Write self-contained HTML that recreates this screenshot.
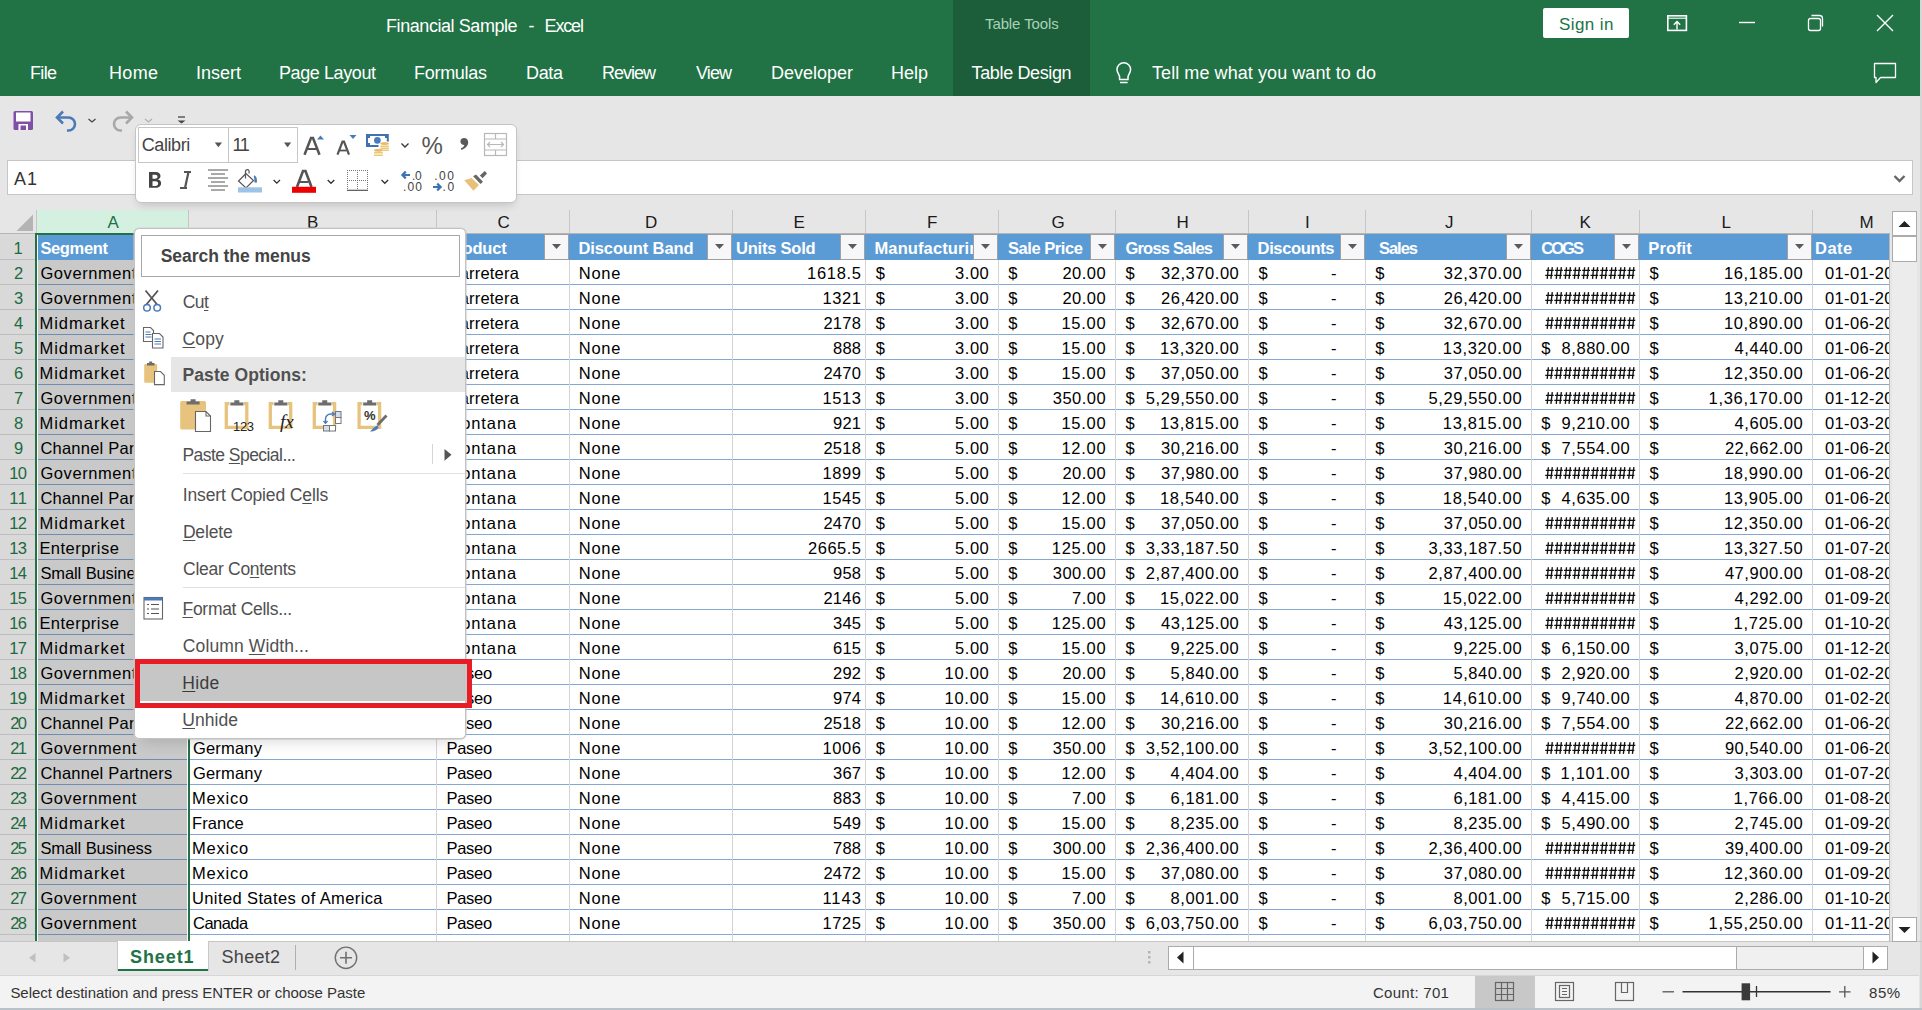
<!DOCTYPE html><html><head><meta charset="utf-8"><style>
html,body{margin:0;padding:0;}body{width:1922px;height:1010px;overflow:hidden;position:relative;background:#e6e6e6;font-family:"Liberation Sans", sans-serif;}
div{box-sizing:border-box;} svg{position:absolute;overflow:visible;}
.u{text-decoration:underline;text-underline-offset:2px;text-decoration-thickness:1px;}
</style></head><body>
<div style="position:absolute;left:0px;top:0px;width:1922px;height:96px;background:#217346;"></div>
<div style="position:absolute;left:953px;top:0px;width:137px;height:96px;background:#1c5e3a;"></div>
<div style="position:absolute;top:16.76px;font-size:18px;line-height:18px;color:#ffffff;white-space:pre;letter-spacing:-0.430px;left:386.00px;">Financial Sample</div>
<div style="position:absolute;top:16.76px;font-size:18px;line-height:18px;color:#ffffff;white-space:pre;left:528.60px;">-</div>
<div style="position:absolute;top:16.76px;font-size:18px;line-height:18px;color:#ffffff;white-space:pre;letter-spacing:-1.129px;left:544.50px;">Excel</div>
<div style="position:absolute;top:15.90px;font-size:15px;line-height:15px;color:#a6d3b6;white-space:pre;letter-spacing:-0.104px;left:985.00px;">Table Tools</div>
<div style="position:absolute;left:1543px;top:8px;width:86px;height:30px;background:#ffffff;border-radius:2px;"></div>
<div style="position:absolute;top:16.31px;font-size:17px;line-height:17px;color:#217346;white-space:pre;letter-spacing:0.413px;left:1559.00px;">Sign in</div>
<svg style="left:0;top:0" width="1922" height="96"><rect x="1667.8" y="15.8" width="18.6" height="14.6" fill="none" stroke="#fff" stroke-width="1.6"/><line x1="1668" y1="18.2" x2="1686" y2="18.2" stroke="#fff" stroke-width="1.1"/><path d="M1677 29.5V21.5M1673.8 24.8l3.2-3.2 3.2 3.2" fill="none" stroke="#fff" stroke-width="1.4"/><line x1="1739" y1="22.5" x2="1755" y2="22.5" stroke="#fff" stroke-width="1.4"/><rect x="1808.5" y="18.5" width="12" height="12" rx="2" fill="none" stroke="#fff" stroke-width="1.3"/><path d="M1811.5 15.5h8a3 3 0 0 1 3 3v8" fill="none" stroke="#fff" stroke-width="1.3"/><path d="M1877 15l16 16M1893 15l-16 16" stroke="#fff" stroke-width="1.4"/><path d="M1117 69.5a6.8 6.8 0 1 1 13.6 0c0 3.2-2.6 4.8-2.6 7.8v2.2h-8.4v-2.2c0-3-2.6-4.6-2.6-7.8z" fill="none" stroke="#fff" stroke-width="1.5"/><line x1="1120" y1="82.5" x2="1127.6" y2="82.5" stroke="#fff" stroke-width="1.5"/><path d="M1874.5 63.5h21v14h-15l-4.5 5v-5h-1.5z" fill="none" stroke="#fff" stroke-width="1.3" stroke-linejoin="round"/></svg>
<div style="position:absolute;top:63.76px;font-size:18px;line-height:18px;color:#ffffff;white-space:pre;letter-spacing:-0.664px;left:30.00px;">File</div>
<div style="position:absolute;top:63.76px;font-size:18px;line-height:18px;color:#ffffff;white-space:pre;letter-spacing:0.332px;left:109.00px;">Home</div>
<div style="position:absolute;top:63.76px;font-size:18px;line-height:18px;color:#ffffff;white-space:pre;letter-spacing:-0.003px;left:196.00px;">Insert</div>
<div style="position:absolute;top:63.76px;font-size:18px;line-height:18px;color:#ffffff;white-space:pre;letter-spacing:-0.408px;left:279.00px;">Page Layout</div>
<div style="position:absolute;top:63.76px;font-size:18px;line-height:18px;color:#ffffff;white-space:pre;letter-spacing:-0.288px;left:414.00px;">Formulas</div>
<div style="position:absolute;top:63.76px;font-size:18px;line-height:18px;color:#ffffff;white-space:pre;letter-spacing:-0.337px;left:526.00px;">Data</div>
<div style="position:absolute;top:63.76px;font-size:18px;line-height:18px;color:#ffffff;white-space:pre;letter-spacing:-1.004px;left:602.00px;">Review</div>
<div style="position:absolute;top:63.76px;font-size:18px;line-height:18px;color:#ffffff;white-space:pre;letter-spacing:-0.897px;left:696.00px;">View</div>
<div style="position:absolute;top:63.76px;font-size:18px;line-height:18px;color:#ffffff;white-space:pre;letter-spacing:-0.006px;left:771.00px;">Developer</div>
<div style="position:absolute;top:63.76px;font-size:18px;line-height:18px;color:#ffffff;white-space:pre;letter-spacing:-0.003px;left:891.00px;">Help</div>
<div style="position:absolute;top:63.76px;font-size:18px;line-height:18px;color:#ffffff;white-space:pre;letter-spacing:-0.368px;left:971.60px;">Table Design</div>
<div style="position:absolute;top:63.76px;font-size:18px;line-height:18px;color:#ffffff;white-space:pre;letter-spacing:0.073px;left:1152.00px;">Tell me what you want to do</div>
<svg style="left:0;top:96" width="200" height="60"><rect x="13.5" y="15" width="19.5" height="19" rx="1.5" fill="#8050a8"/><rect x="16" y="16.5" width="14.5" height="9" fill="#fff"/><rect x="18.5" y="28" width="9.5" height="6" fill="#fff"/><rect x="20.5" y="29.5" width="5.5" height="4.5" fill="#8050a8"/><path d="M58 21.5h10.5a6.5 6.5 0 0 1 0 13h-1.5" fill="none" stroke="#4a7bb7" stroke-width="2.6"/><path d="M63 15.5l-6 6 6 6" fill="none" stroke="#4a7bb7" stroke-width="2.6" stroke-linejoin="miter"/><path d="M88.5 23l3.5 3 3.5-3" fill="none" stroke="#444" stroke-width="1.2"/><path d="M131 21.5h-10.5a6.5 6.5 0 0 0 0 13h1.5" fill="none" stroke="#a8a8a8" stroke-width="2.6"/><path d="M126 15.5l6 6-6 6" fill="none" stroke="#a8a8a8" stroke-width="2.6"/><path d="M145 23l3.5 3 3.5-3" fill="none" stroke="#b0b0b0" stroke-width="1.2"/><line x1="178" y1="21" x2="185" y2="21" stroke="#444" stroke-width="1.3"/><path d="M177.5 24.5h8l-4 3z" fill="#444"/></svg>
<div style="position:absolute;left:7px;top:160px;width:1906px;height:35px;background:#ffffff;border:1px solid #c6c6c6;"></div>
<div style="position:absolute;top:169.76px;font-size:18px;line-height:18px;color:#333333;white-space:pre;letter-spacing:0.994px;left:14.00px;">A1</div>
<svg style="left:0;top:0" width="1922" height="200"><path d="M1894.5 176l5 5 5-5" fill="none" stroke="#666" stroke-width="2.4"/></svg>
<div style="position:absolute;left:1920px;top:0px;width:2px;height:1010px;background:#d6d6d6;"></div>
<div style="position:absolute;left:0px;top:210px;width:1889px;height:24px;background:#e6e6e6;"></div>
<div style="position:absolute;left:37px;top:210px;width:151px;height:24px;background:#d3f0e0;"></div>
<svg style="left:0;top:0" width="40" height="240"><path d="M33 214.5V231H16.5z" fill="#b4b4b4"/></svg>
<div style="position:absolute;left:36px;top:210px;width:1px;height:24px;background:#c6c6c6;"></div>
<div style="position:absolute;left:188px;top:210px;width:1px;height:24px;background:#c6c6c6;"></div>
<div style="position:absolute;left:436px;top:210px;width:1px;height:24px;background:#c6c6c6;"></div>
<div style="position:absolute;left:569px;top:210px;width:1px;height:24px;background:#c6c6c6;"></div>
<div style="position:absolute;left:732px;top:210px;width:1px;height:24px;background:#c6c6c6;"></div>
<div style="position:absolute;left:865px;top:210px;width:1px;height:24px;background:#c6c6c6;"></div>
<div style="position:absolute;left:998px;top:210px;width:1px;height:24px;background:#c6c6c6;"></div>
<div style="position:absolute;left:1115px;top:210px;width:1px;height:24px;background:#c6c6c6;"></div>
<div style="position:absolute;left:1248px;top:210px;width:1px;height:24px;background:#c6c6c6;"></div>
<div style="position:absolute;left:1365px;top:210px;width:1px;height:24px;background:#c6c6c6;"></div>
<div style="position:absolute;left:1531px;top:210px;width:1px;height:24px;background:#c6c6c6;"></div>
<div style="position:absolute;left:1639px;top:210px;width:1px;height:24px;background:#c6c6c6;"></div>
<div style="position:absolute;left:1812px;top:210px;width:1px;height:24px;background:#c6c6c6;"></div>
<div style="position:absolute;left:0px;top:233px;width:1890px;height:1px;background:#b4b4b4;"></div>
<div style="position:absolute;top:213.61px;font-size:17px;line-height:17px;color:#217346;white-space:pre;left:107.50px;">A</div>
<div style="position:absolute;top:213.61px;font-size:17px;line-height:17px;color:#1a1a1a;white-space:pre;left:307.00px;">B</div>
<div style="position:absolute;top:213.61px;font-size:17px;line-height:17px;color:#1a1a1a;white-space:pre;left:497.50px;">C</div>
<div style="position:absolute;top:213.61px;font-size:17px;line-height:17px;color:#1a1a1a;white-space:pre;left:645.00px;">D</div>
<div style="position:absolute;top:213.61px;font-size:17px;line-height:17px;color:#1a1a1a;white-space:pre;left:793.50px;">E</div>
<div style="position:absolute;top:213.61px;font-size:17px;line-height:17px;color:#1a1a1a;white-space:pre;left:927.00px;">F</div>
<div style="position:absolute;top:213.61px;font-size:17px;line-height:17px;color:#1a1a1a;white-space:pre;left:1051.50px;">G</div>
<div style="position:absolute;top:213.61px;font-size:17px;line-height:17px;color:#1a1a1a;white-space:pre;left:1176.50px;">H</div>
<div style="position:absolute;top:213.61px;font-size:17px;line-height:17px;color:#1a1a1a;white-space:pre;left:1305.00px;">I</div>
<div style="position:absolute;top:213.61px;font-size:17px;line-height:17px;color:#1a1a1a;white-space:pre;left:1445.00px;">J</div>
<div style="position:absolute;top:213.61px;font-size:17px;line-height:17px;color:#1a1a1a;white-space:pre;left:1579.50px;">K</div>
<div style="position:absolute;top:213.61px;font-size:17px;line-height:17px;color:#1a1a1a;white-space:pre;left:1721.50px;">L</div>
<div style="position:absolute;top:213.61px;font-size:17px;line-height:17px;color:#1a1a1a;white-space:pre;left:1859.50px;">M</div>
<div style="position:absolute;left:0px;top:234px;width:36px;height:707px;background:#d9d9d9;"></div>
<div style="position:absolute;left:36px;top:235px;width:1853px;height:706px;background:#ffffff;"></div>
<div style="position:absolute;left:1889px;top:234px;width:1px;height:707px;background:#b8b8b8;"></div>
<div style="position:absolute;left:0px;top:941px;width:1922px;height:1px;background:#c6c6c6;"></div>
<div style="position:absolute;left:38px;top:260px;width:149px;height:681px;background:#c9c9c9;"></div>
<div style="position:absolute;left:37px;top:234px;width:1852px;height:26px;background:#5b9bd5;"></div>
<div style="position:absolute;left:0px;top:259px;width:36px;height:1px;background:#bdbdbd;"></div>
<div style="position:absolute;left:37px;top:284px;width:1852px;height:1px;background:#84a7d3;"></div>
<div style="position:absolute;left:38px;top:284px;width:149px;height:1px;background:#6f8db3;"></div>
<div style="position:absolute;left:0px;top:284px;width:36px;height:1px;background:#bdbdbd;"></div>
<div style="position:absolute;left:37px;top:309px;width:1852px;height:1px;background:#84a7d3;"></div>
<div style="position:absolute;left:38px;top:309px;width:149px;height:1px;background:#6f8db3;"></div>
<div style="position:absolute;left:0px;top:309px;width:36px;height:1px;background:#bdbdbd;"></div>
<div style="position:absolute;left:37px;top:334px;width:1852px;height:1px;background:#84a7d3;"></div>
<div style="position:absolute;left:38px;top:334px;width:149px;height:1px;background:#6f8db3;"></div>
<div style="position:absolute;left:0px;top:334px;width:36px;height:1px;background:#bdbdbd;"></div>
<div style="position:absolute;left:37px;top:359px;width:1852px;height:1px;background:#84a7d3;"></div>
<div style="position:absolute;left:38px;top:359px;width:149px;height:1px;background:#6f8db3;"></div>
<div style="position:absolute;left:0px;top:359px;width:36px;height:1px;background:#bdbdbd;"></div>
<div style="position:absolute;left:37px;top:384px;width:1852px;height:1px;background:#84a7d3;"></div>
<div style="position:absolute;left:38px;top:384px;width:149px;height:1px;background:#6f8db3;"></div>
<div style="position:absolute;left:0px;top:384px;width:36px;height:1px;background:#bdbdbd;"></div>
<div style="position:absolute;left:37px;top:409px;width:1852px;height:1px;background:#84a7d3;"></div>
<div style="position:absolute;left:38px;top:409px;width:149px;height:1px;background:#6f8db3;"></div>
<div style="position:absolute;left:0px;top:409px;width:36px;height:1px;background:#bdbdbd;"></div>
<div style="position:absolute;left:37px;top:434px;width:1852px;height:1px;background:#84a7d3;"></div>
<div style="position:absolute;left:38px;top:434px;width:149px;height:1px;background:#6f8db3;"></div>
<div style="position:absolute;left:0px;top:434px;width:36px;height:1px;background:#bdbdbd;"></div>
<div style="position:absolute;left:37px;top:459px;width:1852px;height:1px;background:#84a7d3;"></div>
<div style="position:absolute;left:38px;top:459px;width:149px;height:1px;background:#6f8db3;"></div>
<div style="position:absolute;left:0px;top:459px;width:36px;height:1px;background:#bdbdbd;"></div>
<div style="position:absolute;left:37px;top:484px;width:1852px;height:1px;background:#84a7d3;"></div>
<div style="position:absolute;left:38px;top:484px;width:149px;height:1px;background:#6f8db3;"></div>
<div style="position:absolute;left:0px;top:484px;width:36px;height:1px;background:#bdbdbd;"></div>
<div style="position:absolute;left:37px;top:509px;width:1852px;height:1px;background:#84a7d3;"></div>
<div style="position:absolute;left:38px;top:509px;width:149px;height:1px;background:#6f8db3;"></div>
<div style="position:absolute;left:0px;top:509px;width:36px;height:1px;background:#bdbdbd;"></div>
<div style="position:absolute;left:37px;top:534px;width:1852px;height:1px;background:#84a7d3;"></div>
<div style="position:absolute;left:38px;top:534px;width:149px;height:1px;background:#6f8db3;"></div>
<div style="position:absolute;left:0px;top:534px;width:36px;height:1px;background:#bdbdbd;"></div>
<div style="position:absolute;left:37px;top:559px;width:1852px;height:1px;background:#84a7d3;"></div>
<div style="position:absolute;left:38px;top:559px;width:149px;height:1px;background:#6f8db3;"></div>
<div style="position:absolute;left:0px;top:559px;width:36px;height:1px;background:#bdbdbd;"></div>
<div style="position:absolute;left:37px;top:584px;width:1852px;height:1px;background:#84a7d3;"></div>
<div style="position:absolute;left:38px;top:584px;width:149px;height:1px;background:#6f8db3;"></div>
<div style="position:absolute;left:0px;top:584px;width:36px;height:1px;background:#bdbdbd;"></div>
<div style="position:absolute;left:37px;top:609px;width:1852px;height:1px;background:#84a7d3;"></div>
<div style="position:absolute;left:38px;top:609px;width:149px;height:1px;background:#6f8db3;"></div>
<div style="position:absolute;left:0px;top:609px;width:36px;height:1px;background:#bdbdbd;"></div>
<div style="position:absolute;left:37px;top:634px;width:1852px;height:1px;background:#84a7d3;"></div>
<div style="position:absolute;left:38px;top:634px;width:149px;height:1px;background:#6f8db3;"></div>
<div style="position:absolute;left:0px;top:634px;width:36px;height:1px;background:#bdbdbd;"></div>
<div style="position:absolute;left:37px;top:659px;width:1852px;height:1px;background:#84a7d3;"></div>
<div style="position:absolute;left:38px;top:659px;width:149px;height:1px;background:#6f8db3;"></div>
<div style="position:absolute;left:0px;top:659px;width:36px;height:1px;background:#bdbdbd;"></div>
<div style="position:absolute;left:37px;top:684px;width:1852px;height:1px;background:#84a7d3;"></div>
<div style="position:absolute;left:38px;top:684px;width:149px;height:1px;background:#6f8db3;"></div>
<div style="position:absolute;left:0px;top:684px;width:36px;height:1px;background:#bdbdbd;"></div>
<div style="position:absolute;left:37px;top:709px;width:1852px;height:1px;background:#84a7d3;"></div>
<div style="position:absolute;left:38px;top:709px;width:149px;height:1px;background:#6f8db3;"></div>
<div style="position:absolute;left:0px;top:709px;width:36px;height:1px;background:#bdbdbd;"></div>
<div style="position:absolute;left:37px;top:734px;width:1852px;height:1px;background:#84a7d3;"></div>
<div style="position:absolute;left:38px;top:734px;width:149px;height:1px;background:#6f8db3;"></div>
<div style="position:absolute;left:0px;top:734px;width:36px;height:1px;background:#bdbdbd;"></div>
<div style="position:absolute;left:37px;top:759px;width:1852px;height:1px;background:#84a7d3;"></div>
<div style="position:absolute;left:38px;top:759px;width:149px;height:1px;background:#6f8db3;"></div>
<div style="position:absolute;left:0px;top:759px;width:36px;height:1px;background:#bdbdbd;"></div>
<div style="position:absolute;left:37px;top:784px;width:1852px;height:1px;background:#84a7d3;"></div>
<div style="position:absolute;left:38px;top:784px;width:149px;height:1px;background:#6f8db3;"></div>
<div style="position:absolute;left:0px;top:784px;width:36px;height:1px;background:#bdbdbd;"></div>
<div style="position:absolute;left:37px;top:809px;width:1852px;height:1px;background:#84a7d3;"></div>
<div style="position:absolute;left:38px;top:809px;width:149px;height:1px;background:#6f8db3;"></div>
<div style="position:absolute;left:0px;top:809px;width:36px;height:1px;background:#bdbdbd;"></div>
<div style="position:absolute;left:37px;top:834px;width:1852px;height:1px;background:#84a7d3;"></div>
<div style="position:absolute;left:38px;top:834px;width:149px;height:1px;background:#6f8db3;"></div>
<div style="position:absolute;left:0px;top:834px;width:36px;height:1px;background:#bdbdbd;"></div>
<div style="position:absolute;left:37px;top:859px;width:1852px;height:1px;background:#84a7d3;"></div>
<div style="position:absolute;left:38px;top:859px;width:149px;height:1px;background:#6f8db3;"></div>
<div style="position:absolute;left:0px;top:859px;width:36px;height:1px;background:#bdbdbd;"></div>
<div style="position:absolute;left:37px;top:884px;width:1852px;height:1px;background:#84a7d3;"></div>
<div style="position:absolute;left:38px;top:884px;width:149px;height:1px;background:#6f8db3;"></div>
<div style="position:absolute;left:0px;top:884px;width:36px;height:1px;background:#bdbdbd;"></div>
<div style="position:absolute;left:37px;top:909px;width:1852px;height:1px;background:#84a7d3;"></div>
<div style="position:absolute;left:38px;top:909px;width:149px;height:1px;background:#6f8db3;"></div>
<div style="position:absolute;left:0px;top:909px;width:36px;height:1px;background:#bdbdbd;"></div>
<div style="position:absolute;left:37px;top:934px;width:1852px;height:1px;background:#84a7d3;"></div>
<div style="position:absolute;left:38px;top:934px;width:149px;height:1px;background:#6f8db3;"></div>
<div style="position:absolute;left:0px;top:934px;width:36px;height:1px;background:#bdbdbd;"></div>
<div style="position:absolute;left:37px;top:959px;width:1852px;height:1px;background:#84a7d3;"></div>
<div style="position:absolute;left:38px;top:959px;width:149px;height:1px;background:#6f8db3;"></div>
<div style="position:absolute;left:0px;top:959px;width:36px;height:1px;background:#bdbdbd;"></div>
<div style="position:absolute;left:436px;top:260px;width:1px;height:681px;background:#d4d4d4;"></div>
<div style="position:absolute;left:569px;top:260px;width:1px;height:681px;background:#d4d4d4;"></div>
<div style="position:absolute;left:732px;top:260px;width:1px;height:681px;background:#d4d4d4;"></div>
<div style="position:absolute;left:865px;top:260px;width:1px;height:681px;background:#d4d4d4;"></div>
<div style="position:absolute;left:998px;top:260px;width:1px;height:681px;background:#d4d4d4;"></div>
<div style="position:absolute;left:1115px;top:260px;width:1px;height:681px;background:#d4d4d4;"></div>
<div style="position:absolute;left:1248px;top:260px;width:1px;height:681px;background:#d4d4d4;"></div>
<div style="position:absolute;left:1365px;top:260px;width:1px;height:681px;background:#d4d4d4;"></div>
<div style="position:absolute;left:1531px;top:260px;width:1px;height:681px;background:#d4d4d4;"></div>
<div style="position:absolute;left:1639px;top:260px;width:1px;height:681px;background:#d4d4d4;"></div>
<div style="position:absolute;left:1812px;top:260px;width:1px;height:681px;background:#d4d4d4;"></div>
<div style="position:absolute;left:37px;top:235px;width:1px;height:706px;background:#ffffff;"></div>
<div style="position:absolute;left:187px;top:235px;width:1px;height:706px;background:#ffffff;"></div>
<div style="position:absolute;left:0;top:0;width:1889px;height:941px;overflow:hidden;">
<div style="position:absolute;top:240.03px;font-size:16.5px;line-height:16.5px;color:#1d6a40;white-space:pre;left:13.50px;">1</div>
<div style="position:absolute;top:265.03px;font-size:16.5px;line-height:16.5px;color:#1d6a40;white-space:pre;left:14.00px;">2</div>
<div style="position:absolute;top:290.03px;font-size:16.5px;line-height:16.5px;color:#1d6a40;white-space:pre;left:14.00px;">3</div>
<div style="position:absolute;top:315.03px;font-size:16.5px;line-height:16.5px;color:#1d6a40;white-space:pre;left:14.00px;">4</div>
<div style="position:absolute;top:340.03px;font-size:16.5px;line-height:16.5px;color:#1d6a40;white-space:pre;left:14.00px;">5</div>
<div style="position:absolute;top:365.03px;font-size:16.5px;line-height:16.5px;color:#1d6a40;white-space:pre;left:14.00px;">6</div>
<div style="position:absolute;top:390.03px;font-size:16.5px;line-height:16.5px;color:#1d6a40;white-space:pre;left:14.00px;">7</div>
<div style="position:absolute;top:415.03px;font-size:16.5px;line-height:16.5px;color:#1d6a40;white-space:pre;left:14.00px;">8</div>
<div style="position:absolute;top:440.03px;font-size:16.5px;line-height:16.5px;color:#1d6a40;white-space:pre;left:14.00px;">9</div>
<div style="position:absolute;top:465.03px;font-size:16.5px;line-height:16.5px;color:#1d6a40;white-space:pre;letter-spacing:-0.433px;left:9.13px;">10</div>
<div style="position:absolute;top:490.03px;font-size:16.5px;line-height:16.5px;color:#1d6a40;white-space:pre;letter-spacing:0.792px;left:9.13px;">11</div>
<div style="position:absolute;top:515.03px;font-size:16.5px;line-height:16.5px;color:#1d6a40;white-space:pre;letter-spacing:-0.433px;left:9.13px;">12</div>
<div style="position:absolute;top:540.03px;font-size:16.5px;line-height:16.5px;color:#1d6a40;white-space:pre;letter-spacing:-0.433px;left:9.13px;">13</div>
<div style="position:absolute;top:565.03px;font-size:16.5px;line-height:16.5px;color:#1d6a40;white-space:pre;letter-spacing:-0.433px;left:9.13px;">14</div>
<div style="position:absolute;top:590.03px;font-size:16.5px;line-height:16.5px;color:#1d6a40;white-space:pre;letter-spacing:-0.433px;left:9.13px;">15</div>
<div style="position:absolute;top:615.03px;font-size:16.5px;line-height:16.5px;color:#1d6a40;white-space:pre;letter-spacing:-0.433px;left:9.13px;">16</div>
<div style="position:absolute;top:640.03px;font-size:16.5px;line-height:16.5px;color:#1d6a40;white-space:pre;letter-spacing:-0.433px;left:9.13px;">17</div>
<div style="position:absolute;top:665.03px;font-size:16.5px;line-height:16.5px;color:#1d6a40;white-space:pre;letter-spacing:-0.433px;left:9.13px;">18</div>
<div style="position:absolute;top:690.03px;font-size:16.5px;line-height:16.5px;color:#1d6a40;white-space:pre;letter-spacing:-0.433px;left:9.13px;">19</div>
<div style="position:absolute;top:715.03px;font-size:16.5px;line-height:16.5px;color:#1d6a40;white-space:pre;letter-spacing:-1.433px;left:10.13px;">20</div>
<div style="position:absolute;top:740.03px;font-size:16.5px;line-height:16.5px;color:#1d6a40;white-space:pre;letter-spacing:-1.433px;left:10.13px;">21</div>
<div style="position:absolute;top:765.03px;font-size:16.5px;line-height:16.5px;color:#1d6a40;white-space:pre;letter-spacing:-1.433px;left:10.13px;">22</div>
<div style="position:absolute;top:790.03px;font-size:16.5px;line-height:16.5px;color:#1d6a40;white-space:pre;letter-spacing:-1.433px;left:10.13px;">23</div>
<div style="position:absolute;top:815.03px;font-size:16.5px;line-height:16.5px;color:#1d6a40;white-space:pre;letter-spacing:-1.433px;left:10.13px;">24</div>
<div style="position:absolute;top:840.03px;font-size:16.5px;line-height:16.5px;color:#1d6a40;white-space:pre;letter-spacing:-1.433px;left:10.13px;">25</div>
<div style="position:absolute;top:865.03px;font-size:16.5px;line-height:16.5px;color:#1d6a40;white-space:pre;letter-spacing:-1.433px;left:10.13px;">26</div>
<div style="position:absolute;top:890.03px;font-size:16.5px;line-height:16.5px;color:#1d6a40;white-space:pre;letter-spacing:-1.433px;left:10.13px;">27</div>
<div style="position:absolute;top:915.03px;font-size:16.5px;line-height:16.5px;color:#1d6a40;white-space:pre;letter-spacing:-1.433px;left:10.13px;">28</div>
<div style="position:absolute;top:940.03px;font-size:16.5px;line-height:16.5px;color:#1d6a40;white-space:pre;letter-spacing:-1.433px;left:10.13px;">29</div>
<div style="position:absolute;left:38px;top:234px;width:150px;height:25px;overflow:hidden;">
<div style="position:absolute;top:6.03px;font-size:16.5px;line-height:16.5px;color:#ffffff;white-space:pre;font-weight:bold;letter-spacing:-0.359px;left:2.40px;">Segment</div>
</div>
<div style="position:absolute;left:189px;top:234px;width:247px;height:25px;overflow:hidden;">
<div style="position:absolute;top:6.03px;font-size:16.5px;line-height:16.5px;color:#ffffff;white-space:pre;font-weight:bold;letter-spacing:-0.397px;left:4.00px;">Country</div>
</div>
<div style="position:absolute;left:437px;top:234px;width:132px;height:25px;overflow:hidden;">
<div style="position:absolute;top:6.03px;font-size:16.5px;line-height:16.5px;color:#ffffff;white-space:pre;font-weight:bold;letter-spacing:-0.193px;left:8.50px;">Product</div>
</div>
<div style="position:absolute;left:570px;top:234px;width:162px;height:25px;overflow:hidden;">
<div style="position:absolute;top:6.03px;font-size:16.5px;line-height:16.5px;color:#ffffff;white-space:pre;font-weight:bold;letter-spacing:-0.117px;left:8.50px;">Discount Band</div>
</div>
<div style="position:absolute;left:733px;top:234px;width:132px;height:25px;overflow:hidden;">
<div style="position:absolute;top:6.03px;font-size:16.5px;line-height:16.5px;color:#ffffff;white-space:pre;font-weight:bold;letter-spacing:-0.217px;left:3.00px;">Units Sold</div>
</div>
<div style="position:absolute;left:866px;top:234px;width:132px;height:25px;overflow:hidden;">
<div style="position:absolute;top:6.03px;font-size:16.5px;line-height:16.5px;color:#ffffff;white-space:pre;font-weight:bold;letter-spacing:0.109px;left:8.50px;">Manufacturing Price</div>
</div>
<div style="position:absolute;left:999px;top:234px;width:116px;height:25px;overflow:hidden;">
<div style="position:absolute;top:6.03px;font-size:16.5px;line-height:16.5px;color:#ffffff;white-space:pre;font-weight:bold;letter-spacing:-0.454px;left:9.00px;">Sale Price</div>
</div>
<div style="position:absolute;left:1116px;top:234px;width:132px;height:25px;overflow:hidden;">
<div style="position:absolute;top:6.03px;font-size:16.5px;line-height:16.5px;color:#ffffff;white-space:pre;font-weight:bold;letter-spacing:-0.777px;left:9.40px;">Gross Sales</div>
</div>
<div style="position:absolute;left:1249px;top:234px;width:116px;height:25px;overflow:hidden;">
<div style="position:absolute;top:6.03px;font-size:16.5px;line-height:16.5px;color:#ffffff;white-space:pre;font-weight:bold;letter-spacing:-0.364px;left:8.60px;">Discounts</div>
</div>
<div style="position:absolute;left:1366px;top:234px;width:165px;height:25px;overflow:hidden;">
<div style="position:absolute;top:6.03px;font-size:16.5px;line-height:16.5px;color:#ffffff;white-space:pre;font-weight:bold;letter-spacing:-1.038px;left:13.00px;">Sales</div>
</div>
<div style="position:absolute;left:1532px;top:234px;width:107px;height:25px;overflow:hidden;">
<div style="position:absolute;top:6.03px;font-size:16.5px;line-height:16.5px;color:#ffffff;white-space:pre;font-weight:bold;letter-spacing:-1.994px;left:9.30px;">COGS</div>
</div>
<div style="position:absolute;left:1640px;top:234px;width:172px;height:25px;overflow:hidden;">
<div style="position:absolute;top:6.03px;font-size:16.5px;line-height:16.5px;color:#ffffff;white-space:pre;font-weight:bold;letter-spacing:0.076px;left:8.30px;">Profit</div>
</div>
<div style="position:absolute;left:1813px;top:234px;width:76px;height:25px;overflow:hidden;">
<div style="position:absolute;top:6.03px;font-size:16.5px;line-height:16.5px;color:#ffffff;white-space:pre;font-weight:bold;letter-spacing:0.506px;left:2.00px;">Date</div>
</div>
<div style="position:absolute;left:163px;top:234px;width:25px;height:26px;background:#f7f7f9;border:1px solid #a0a0a0;"></div>
<svg style="left:171px;top:244px" width="12" height="8"><path d="M0 0h9l-4.5 5z" fill="#5a5a5a"/></svg>
<div style="position:absolute;left:411px;top:234px;width:25px;height:26px;background:#f7f7f9;border:1px solid #a0a0a0;"></div>
<svg style="left:419px;top:244px" width="12" height="8"><path d="M0 0h9l-4.5 5z" fill="#5a5a5a"/></svg>
<div style="position:absolute;left:544px;top:234px;width:25px;height:26px;background:#f7f7f9;border:1px solid #a0a0a0;"></div>
<svg style="left:552px;top:244px" width="12" height="8"><path d="M0 0h9l-4.5 5z" fill="#5a5a5a"/></svg>
<div style="position:absolute;left:707px;top:234px;width:25px;height:26px;background:#f7f7f9;border:1px solid #a0a0a0;"></div>
<svg style="left:715px;top:244px" width="12" height="8"><path d="M0 0h9l-4.5 5z" fill="#5a5a5a"/></svg>
<div style="position:absolute;left:840px;top:234px;width:25px;height:26px;background:#f7f7f9;border:1px solid #a0a0a0;"></div>
<svg style="left:848px;top:244px" width="12" height="8"><path d="M0 0h9l-4.5 5z" fill="#5a5a5a"/></svg>
<div style="position:absolute;left:973px;top:234px;width:25px;height:26px;background:#f7f7f9;border:1px solid #a0a0a0;"></div>
<svg style="left:981px;top:244px" width="12" height="8"><path d="M0 0h9l-4.5 5z" fill="#5a5a5a"/></svg>
<div style="position:absolute;left:1090px;top:234px;width:25px;height:26px;background:#f7f7f9;border:1px solid #a0a0a0;"></div>
<svg style="left:1098px;top:244px" width="12" height="8"><path d="M0 0h9l-4.5 5z" fill="#5a5a5a"/></svg>
<div style="position:absolute;left:1223px;top:234px;width:25px;height:26px;background:#f7f7f9;border:1px solid #a0a0a0;"></div>
<svg style="left:1231px;top:244px" width="12" height="8"><path d="M0 0h9l-4.5 5z" fill="#5a5a5a"/></svg>
<div style="position:absolute;left:1340px;top:234px;width:25px;height:26px;background:#f7f7f9;border:1px solid #a0a0a0;"></div>
<svg style="left:1348px;top:244px" width="12" height="8"><path d="M0 0h9l-4.5 5z" fill="#5a5a5a"/></svg>
<div style="position:absolute;left:1506px;top:234px;width:25px;height:26px;background:#f7f7f9;border:1px solid #a0a0a0;"></div>
<svg style="left:1514px;top:244px" width="12" height="8"><path d="M0 0h9l-4.5 5z" fill="#5a5a5a"/></svg>
<div style="position:absolute;left:1614px;top:234px;width:25px;height:26px;background:#f7f7f9;border:1px solid #a0a0a0;"></div>
<svg style="left:1622px;top:244px" width="12" height="8"><path d="M0 0h9l-4.5 5z" fill="#5a5a5a"/></svg>
<div style="position:absolute;left:1787px;top:234px;width:25px;height:26px;background:#f7f7f9;border:1px solid #a0a0a0;"></div>
<svg style="left:1795px;top:244px" width="12" height="8"><path d="M0 0h9l-4.5 5z" fill="#5a5a5a"/></svg>
<div style="position:absolute;top:265.03px;font-size:16.5px;line-height:16.5px;color:#000;white-space:pre;letter-spacing:0.577px;left:40.40px;">Government</div>
<div style="position:absolute;top:265.03px;font-size:16.5px;line-height:16.5px;color:#000;white-space:pre;letter-spacing:-0.518px;left:193.00px;">Canada</div>
<div style="position:absolute;top:265.03px;font-size:16.5px;line-height:16.5px;color:#000;white-space:pre;letter-spacing:0.211px;left:447.50px;">Carretera</div>
<div style="position:absolute;top:265.03px;font-size:16.5px;line-height:16.5px;color:#000;white-space:pre;letter-spacing:0.688px;left:578.80px;">None</div>
<div style="position:absolute;top:265.03px;font-size:16.5px;line-height:16.5px;color:#000;white-space:pre;letter-spacing:0.682px;left:807.10px;">1618.5</div>
<div style="position:absolute;top:265.03px;font-size:16.5px;line-height:16.5px;color:#000;white-space:pre;left:875.80px;">$</div>
<div style="position:absolute;top:265.03px;font-size:16.5px;line-height:16.5px;color:#000;white-space:pre;letter-spacing:0.521px;left:955.10px;">3.00</div>
<div style="position:absolute;top:265.03px;font-size:16.5px;line-height:16.5px;color:#000;white-space:pre;left:1008.30px;">$</div>
<div style="position:absolute;top:265.03px;font-size:16.5px;line-height:16.5px;color:#000;white-space:pre;letter-spacing:0.497px;left:1062.40px;">20.00</div>
<div style="position:absolute;top:265.03px;font-size:16.5px;line-height:16.5px;color:#000;white-space:pre;left:1125.50px;">$</div>
<div style="position:absolute;top:265.03px;font-size:16.5px;line-height:16.5px;color:#000;white-space:pre;letter-spacing:0.547px;left:1161.00px;">32,370.00</div>
<div style="position:absolute;top:265.03px;font-size:16.5px;line-height:16.5px;color:#000;white-space:pre;left:1258.50px;">$</div>
<div style="position:absolute;top:265.03px;font-size:16.5px;line-height:16.5px;color:#000;white-space:pre;left:1331.00px;">-</div>
<div style="position:absolute;top:265.03px;font-size:16.5px;line-height:16.5px;color:#000;white-space:pre;left:1375.30px;">$</div>
<div style="position:absolute;top:265.03px;font-size:16.5px;line-height:16.5px;color:#000;white-space:pre;letter-spacing:0.547px;left:1443.80px;">32,370.00</div>
<svg style="left:0;top:0" width="1700" height="945"><path d="M1548.40 267.20L1547.20 278.90M1552.30 267.20L1550.90 278.90M1545.90 270.40h7.85M1545.20 275.40h7.6M1557.46 267.20L1556.26 278.90M1561.36 267.20L1559.96 278.90M1554.96 270.40h7.85M1554.26 275.40h7.6M1566.52 267.20L1565.32 278.90M1570.42 267.20L1569.02 278.90M1564.02 270.40h7.85M1563.32 275.40h7.6M1575.58 267.20L1574.38 278.90M1579.48 267.20L1578.08 278.90M1573.08 270.40h7.85M1572.38 275.40h7.6M1584.64 267.20L1583.44 278.90M1588.54 267.20L1587.14 278.90M1582.14 270.40h7.85M1581.44 275.40h7.6M1593.70 267.20L1592.50 278.90M1597.60 267.20L1596.20 278.90M1591.20 270.40h7.85M1590.50 275.40h7.6M1602.76 267.20L1601.56 278.90M1606.66 267.20L1605.26 278.90M1600.26 270.40h7.85M1599.56 275.40h7.6M1611.82 267.20L1610.62 278.90M1615.72 267.20L1614.32 278.90M1609.32 270.40h7.85M1608.62 275.40h7.6M1620.88 267.20L1619.68 278.90M1624.78 267.20L1623.38 278.90M1618.38 270.40h7.85M1617.68 275.40h7.6M1629.94 267.20L1628.74 278.90M1633.84 267.20L1632.44 278.90M1627.44 270.40h7.85M1626.74 275.40h7.6" stroke="#111" stroke-width="1.35" fill="none"/></svg>
<div style="position:absolute;top:265.03px;font-size:16.5px;line-height:16.5px;color:#000;white-space:pre;left:1649.50px;">$</div>
<div style="position:absolute;top:265.03px;font-size:16.5px;line-height:16.5px;color:#000;white-space:pre;letter-spacing:0.672px;left:1723.90px;">16,185.00</div>
<div style="position:absolute;top:265.03px;font-size:16.5px;line-height:16.5px;color:#000;white-space:pre;letter-spacing:0.356px;left:1825.00px;">01-01-2014</div>
<div style="position:absolute;top:290.03px;font-size:16.5px;line-height:16.5px;color:#000;white-space:pre;letter-spacing:0.577px;left:40.40px;">Government</div>
<div style="position:absolute;top:290.03px;font-size:16.5px;line-height:16.5px;color:#000;white-space:pre;letter-spacing:0.172px;left:193.00px;">Germany</div>
<div style="position:absolute;top:290.03px;font-size:16.5px;line-height:16.5px;color:#000;white-space:pre;letter-spacing:0.211px;left:447.50px;">Carretera</div>
<div style="position:absolute;top:290.03px;font-size:16.5px;line-height:16.5px;color:#000;white-space:pre;letter-spacing:0.688px;left:578.80px;">None</div>
<div style="position:absolute;top:290.03px;font-size:16.5px;line-height:16.5px;color:#000;white-space:pre;letter-spacing:0.623px;left:822.40px;">1321</div>
<div style="position:absolute;top:290.03px;font-size:16.5px;line-height:16.5px;color:#000;white-space:pre;left:875.80px;">$</div>
<div style="position:absolute;top:290.03px;font-size:16.5px;line-height:16.5px;color:#000;white-space:pre;letter-spacing:0.521px;left:955.10px;">3.00</div>
<div style="position:absolute;top:290.03px;font-size:16.5px;line-height:16.5px;color:#000;white-space:pre;left:1008.30px;">$</div>
<div style="position:absolute;top:290.03px;font-size:16.5px;line-height:16.5px;color:#000;white-space:pre;letter-spacing:0.497px;left:1062.40px;">20.00</div>
<div style="position:absolute;top:290.03px;font-size:16.5px;line-height:16.5px;color:#000;white-space:pre;left:1125.50px;">$</div>
<div style="position:absolute;top:290.03px;font-size:16.5px;line-height:16.5px;color:#000;white-space:pre;letter-spacing:0.547px;left:1161.00px;">26,420.00</div>
<div style="position:absolute;top:290.03px;font-size:16.5px;line-height:16.5px;color:#000;white-space:pre;left:1258.50px;">$</div>
<div style="position:absolute;top:290.03px;font-size:16.5px;line-height:16.5px;color:#000;white-space:pre;left:1331.00px;">-</div>
<div style="position:absolute;top:290.03px;font-size:16.5px;line-height:16.5px;color:#000;white-space:pre;left:1375.30px;">$</div>
<div style="position:absolute;top:290.03px;font-size:16.5px;line-height:16.5px;color:#000;white-space:pre;letter-spacing:0.547px;left:1443.80px;">26,420.00</div>
<svg style="left:0;top:0" width="1700" height="945"><path d="M1548.40 292.20L1547.20 303.90M1552.30 292.20L1550.90 303.90M1545.90 295.40h7.85M1545.20 300.40h7.6M1557.46 292.20L1556.26 303.90M1561.36 292.20L1559.96 303.90M1554.96 295.40h7.85M1554.26 300.40h7.6M1566.52 292.20L1565.32 303.90M1570.42 292.20L1569.02 303.90M1564.02 295.40h7.85M1563.32 300.40h7.6M1575.58 292.20L1574.38 303.90M1579.48 292.20L1578.08 303.90M1573.08 295.40h7.85M1572.38 300.40h7.6M1584.64 292.20L1583.44 303.90M1588.54 292.20L1587.14 303.90M1582.14 295.40h7.85M1581.44 300.40h7.6M1593.70 292.20L1592.50 303.90M1597.60 292.20L1596.20 303.90M1591.20 295.40h7.85M1590.50 300.40h7.6M1602.76 292.20L1601.56 303.90M1606.66 292.20L1605.26 303.90M1600.26 295.40h7.85M1599.56 300.40h7.6M1611.82 292.20L1610.62 303.90M1615.72 292.20L1614.32 303.90M1609.32 295.40h7.85M1608.62 300.40h7.6M1620.88 292.20L1619.68 303.90M1624.78 292.20L1623.38 303.90M1618.38 295.40h7.85M1617.68 300.40h7.6M1629.94 292.20L1628.74 303.90M1633.84 292.20L1632.44 303.90M1627.44 295.40h7.85M1626.74 300.40h7.6" stroke="#111" stroke-width="1.35" fill="none"/></svg>
<div style="position:absolute;top:290.03px;font-size:16.5px;line-height:16.5px;color:#000;white-space:pre;left:1649.50px;">$</div>
<div style="position:absolute;top:290.03px;font-size:16.5px;line-height:16.5px;color:#000;white-space:pre;letter-spacing:0.672px;left:1723.90px;">13,210.00</div>
<div style="position:absolute;top:290.03px;font-size:16.5px;line-height:16.5px;color:#000;white-space:pre;letter-spacing:0.356px;left:1825.00px;">01-01-2014</div>
<div style="position:absolute;top:315.03px;font-size:16.5px;line-height:16.5px;color:#000;white-space:pre;letter-spacing:1.034px;left:39.40px;">Midmarket</div>
<div style="position:absolute;top:315.03px;font-size:16.5px;line-height:16.5px;color:#000;white-space:pre;letter-spacing:0.077px;left:192.00px;">France</div>
<div style="position:absolute;top:315.03px;font-size:16.5px;line-height:16.5px;color:#000;white-space:pre;letter-spacing:0.211px;left:447.50px;">Carretera</div>
<div style="position:absolute;top:315.03px;font-size:16.5px;line-height:16.5px;color:#000;white-space:pre;letter-spacing:0.688px;left:578.80px;">None</div>
<div style="position:absolute;top:315.03px;font-size:16.5px;line-height:16.5px;color:#000;white-space:pre;letter-spacing:0.290px;left:823.40px;">2178</div>
<div style="position:absolute;top:315.03px;font-size:16.5px;line-height:16.5px;color:#000;white-space:pre;left:875.80px;">$</div>
<div style="position:absolute;top:315.03px;font-size:16.5px;line-height:16.5px;color:#000;white-space:pre;letter-spacing:0.521px;left:955.10px;">3.00</div>
<div style="position:absolute;top:315.03px;font-size:16.5px;line-height:16.5px;color:#000;white-space:pre;left:1008.30px;">$</div>
<div style="position:absolute;top:315.03px;font-size:16.5px;line-height:16.5px;color:#000;white-space:pre;letter-spacing:0.747px;left:1061.40px;">15.00</div>
<div style="position:absolute;top:315.03px;font-size:16.5px;line-height:16.5px;color:#000;white-space:pre;left:1125.50px;">$</div>
<div style="position:absolute;top:315.03px;font-size:16.5px;line-height:16.5px;color:#000;white-space:pre;letter-spacing:0.547px;left:1161.00px;">32,670.00</div>
<div style="position:absolute;top:315.03px;font-size:16.5px;line-height:16.5px;color:#000;white-space:pre;left:1258.50px;">$</div>
<div style="position:absolute;top:315.03px;font-size:16.5px;line-height:16.5px;color:#000;white-space:pre;left:1331.00px;">-</div>
<div style="position:absolute;top:315.03px;font-size:16.5px;line-height:16.5px;color:#000;white-space:pre;left:1375.30px;">$</div>
<div style="position:absolute;top:315.03px;font-size:16.5px;line-height:16.5px;color:#000;white-space:pre;letter-spacing:0.547px;left:1443.80px;">32,670.00</div>
<svg style="left:0;top:0" width="1700" height="945"><path d="M1548.40 317.20L1547.20 328.90M1552.30 317.20L1550.90 328.90M1545.90 320.40h7.85M1545.20 325.40h7.6M1557.46 317.20L1556.26 328.90M1561.36 317.20L1559.96 328.90M1554.96 320.40h7.85M1554.26 325.40h7.6M1566.52 317.20L1565.32 328.90M1570.42 317.20L1569.02 328.90M1564.02 320.40h7.85M1563.32 325.40h7.6M1575.58 317.20L1574.38 328.90M1579.48 317.20L1578.08 328.90M1573.08 320.40h7.85M1572.38 325.40h7.6M1584.64 317.20L1583.44 328.90M1588.54 317.20L1587.14 328.90M1582.14 320.40h7.85M1581.44 325.40h7.6M1593.70 317.20L1592.50 328.90M1597.60 317.20L1596.20 328.90M1591.20 320.40h7.85M1590.50 325.40h7.6M1602.76 317.20L1601.56 328.90M1606.66 317.20L1605.26 328.90M1600.26 320.40h7.85M1599.56 325.40h7.6M1611.82 317.20L1610.62 328.90M1615.72 317.20L1614.32 328.90M1609.32 320.40h7.85M1608.62 325.40h7.6M1620.88 317.20L1619.68 328.90M1624.78 317.20L1623.38 328.90M1618.38 320.40h7.85M1617.68 325.40h7.6M1629.94 317.20L1628.74 328.90M1633.84 317.20L1632.44 328.90M1627.44 320.40h7.85M1626.74 325.40h7.6" stroke="#111" stroke-width="1.35" fill="none"/></svg>
<div style="position:absolute;top:315.03px;font-size:16.5px;line-height:16.5px;color:#000;white-space:pre;left:1649.50px;">$</div>
<div style="position:absolute;top:315.03px;font-size:16.5px;line-height:16.5px;color:#000;white-space:pre;letter-spacing:0.672px;left:1723.90px;">10,890.00</div>
<div style="position:absolute;top:315.03px;font-size:16.5px;line-height:16.5px;color:#000;white-space:pre;letter-spacing:0.356px;left:1825.00px;">01-06-2014</div>
<div style="position:absolute;top:340.03px;font-size:16.5px;line-height:16.5px;color:#000;white-space:pre;letter-spacing:1.034px;left:39.40px;">Midmarket</div>
<div style="position:absolute;top:340.03px;font-size:16.5px;line-height:16.5px;color:#000;white-space:pre;letter-spacing:0.172px;left:193.00px;">Germany</div>
<div style="position:absolute;top:340.03px;font-size:16.5px;line-height:16.5px;color:#000;white-space:pre;letter-spacing:0.211px;left:447.50px;">Carretera</div>
<div style="position:absolute;top:340.03px;font-size:16.5px;line-height:16.5px;color:#000;white-space:pre;letter-spacing:0.688px;left:578.80px;">None</div>
<div style="position:absolute;top:340.03px;font-size:16.5px;line-height:16.5px;color:#000;white-space:pre;letter-spacing:0.223px;left:833.00px;">888</div>
<div style="position:absolute;top:340.03px;font-size:16.5px;line-height:16.5px;color:#000;white-space:pre;left:875.80px;">$</div>
<div style="position:absolute;top:340.03px;font-size:16.5px;line-height:16.5px;color:#000;white-space:pre;letter-spacing:0.521px;left:955.10px;">3.00</div>
<div style="position:absolute;top:340.03px;font-size:16.5px;line-height:16.5px;color:#000;white-space:pre;left:1008.30px;">$</div>
<div style="position:absolute;top:340.03px;font-size:16.5px;line-height:16.5px;color:#000;white-space:pre;letter-spacing:0.747px;left:1061.40px;">15.00</div>
<div style="position:absolute;top:340.03px;font-size:16.5px;line-height:16.5px;color:#000;white-space:pre;left:1125.50px;">$</div>
<div style="position:absolute;top:340.03px;font-size:16.5px;line-height:16.5px;color:#000;white-space:pre;letter-spacing:0.672px;left:1160.00px;">13,320.00</div>
<div style="position:absolute;top:340.03px;font-size:16.5px;line-height:16.5px;color:#000;white-space:pre;left:1258.50px;">$</div>
<div style="position:absolute;top:340.03px;font-size:16.5px;line-height:16.5px;color:#000;white-space:pre;left:1331.00px;">-</div>
<div style="position:absolute;top:340.03px;font-size:16.5px;line-height:16.5px;color:#000;white-space:pre;left:1375.30px;">$</div>
<div style="position:absolute;top:340.03px;font-size:16.5px;line-height:16.5px;color:#000;white-space:pre;letter-spacing:0.672px;left:1442.80px;">13,320.00</div>
<div style="position:absolute;top:340.03px;font-size:16.5px;line-height:16.5px;color:#000;white-space:pre;left:1541.30px;">$</div>
<div style="position:absolute;top:340.03px;font-size:16.5px;line-height:16.5px;color:#000;white-space:pre;letter-spacing:0.564px;left:1561.50px;">8,880.00</div>
<div style="position:absolute;top:340.03px;font-size:16.5px;line-height:16.5px;color:#000;white-space:pre;left:1649.50px;">$</div>
<div style="position:absolute;top:340.03px;font-size:16.5px;line-height:16.5px;color:#000;white-space:pre;letter-spacing:0.564px;left:1734.50px;">4,440.00</div>
<div style="position:absolute;top:340.03px;font-size:16.5px;line-height:16.5px;color:#000;white-space:pre;letter-spacing:0.356px;left:1825.00px;">01-06-2014</div>
<div style="position:absolute;top:365.03px;font-size:16.5px;line-height:16.5px;color:#000;white-space:pre;letter-spacing:1.034px;left:39.40px;">Midmarket</div>
<div style="position:absolute;top:365.03px;font-size:16.5px;line-height:16.5px;color:#000;white-space:pre;letter-spacing:0.783px;left:192.00px;">Mexico</div>
<div style="position:absolute;top:365.03px;font-size:16.5px;line-height:16.5px;color:#000;white-space:pre;letter-spacing:0.211px;left:447.50px;">Carretera</div>
<div style="position:absolute;top:365.03px;font-size:16.5px;line-height:16.5px;color:#000;white-space:pre;letter-spacing:0.688px;left:578.80px;">None</div>
<div style="position:absolute;top:365.03px;font-size:16.5px;line-height:16.5px;color:#000;white-space:pre;letter-spacing:0.290px;left:823.40px;">2470</div>
<div style="position:absolute;top:365.03px;font-size:16.5px;line-height:16.5px;color:#000;white-space:pre;left:875.80px;">$</div>
<div style="position:absolute;top:365.03px;font-size:16.5px;line-height:16.5px;color:#000;white-space:pre;letter-spacing:0.521px;left:955.10px;">3.00</div>
<div style="position:absolute;top:365.03px;font-size:16.5px;line-height:16.5px;color:#000;white-space:pre;left:1008.30px;">$</div>
<div style="position:absolute;top:365.03px;font-size:16.5px;line-height:16.5px;color:#000;white-space:pre;letter-spacing:0.747px;left:1061.40px;">15.00</div>
<div style="position:absolute;top:365.03px;font-size:16.5px;line-height:16.5px;color:#000;white-space:pre;left:1125.50px;">$</div>
<div style="position:absolute;top:365.03px;font-size:16.5px;line-height:16.5px;color:#000;white-space:pre;letter-spacing:0.547px;left:1161.00px;">37,050.00</div>
<div style="position:absolute;top:365.03px;font-size:16.5px;line-height:16.5px;color:#000;white-space:pre;left:1258.50px;">$</div>
<div style="position:absolute;top:365.03px;font-size:16.5px;line-height:16.5px;color:#000;white-space:pre;left:1331.00px;">-</div>
<div style="position:absolute;top:365.03px;font-size:16.5px;line-height:16.5px;color:#000;white-space:pre;left:1375.30px;">$</div>
<div style="position:absolute;top:365.03px;font-size:16.5px;line-height:16.5px;color:#000;white-space:pre;letter-spacing:0.547px;left:1443.80px;">37,050.00</div>
<svg style="left:0;top:0" width="1700" height="945"><path d="M1548.40 367.20L1547.20 378.90M1552.30 367.20L1550.90 378.90M1545.90 370.40h7.85M1545.20 375.40h7.6M1557.46 367.20L1556.26 378.90M1561.36 367.20L1559.96 378.90M1554.96 370.40h7.85M1554.26 375.40h7.6M1566.52 367.20L1565.32 378.90M1570.42 367.20L1569.02 378.90M1564.02 370.40h7.85M1563.32 375.40h7.6M1575.58 367.20L1574.38 378.90M1579.48 367.20L1578.08 378.90M1573.08 370.40h7.85M1572.38 375.40h7.6M1584.64 367.20L1583.44 378.90M1588.54 367.20L1587.14 378.90M1582.14 370.40h7.85M1581.44 375.40h7.6M1593.70 367.20L1592.50 378.90M1597.60 367.20L1596.20 378.90M1591.20 370.40h7.85M1590.50 375.40h7.6M1602.76 367.20L1601.56 378.90M1606.66 367.20L1605.26 378.90M1600.26 370.40h7.85M1599.56 375.40h7.6M1611.82 367.20L1610.62 378.90M1615.72 367.20L1614.32 378.90M1609.32 370.40h7.85M1608.62 375.40h7.6M1620.88 367.20L1619.68 378.90M1624.78 367.20L1623.38 378.90M1618.38 370.40h7.85M1617.68 375.40h7.6M1629.94 367.20L1628.74 378.90M1633.84 367.20L1632.44 378.90M1627.44 370.40h7.85M1626.74 375.40h7.6" stroke="#111" stroke-width="1.35" fill="none"/></svg>
<div style="position:absolute;top:365.03px;font-size:16.5px;line-height:16.5px;color:#000;white-space:pre;left:1649.50px;">$</div>
<div style="position:absolute;top:365.03px;font-size:16.5px;line-height:16.5px;color:#000;white-space:pre;letter-spacing:0.672px;left:1723.90px;">12,350.00</div>
<div style="position:absolute;top:365.03px;font-size:16.5px;line-height:16.5px;color:#000;white-space:pre;letter-spacing:0.356px;left:1825.00px;">01-06-2014</div>
<div style="position:absolute;top:390.03px;font-size:16.5px;line-height:16.5px;color:#000;white-space:pre;letter-spacing:0.577px;left:40.40px;">Government</div>
<div style="position:absolute;top:390.03px;font-size:16.5px;line-height:16.5px;color:#000;white-space:pre;letter-spacing:0.172px;left:193.00px;">Germany</div>
<div style="position:absolute;top:390.03px;font-size:16.5px;line-height:16.5px;color:#000;white-space:pre;letter-spacing:0.211px;left:447.50px;">Carretera</div>
<div style="position:absolute;top:390.03px;font-size:16.5px;line-height:16.5px;color:#000;white-space:pre;letter-spacing:0.688px;left:578.80px;">None</div>
<div style="position:absolute;top:390.03px;font-size:16.5px;line-height:16.5px;color:#000;white-space:pre;letter-spacing:0.623px;left:822.40px;">1513</div>
<div style="position:absolute;top:390.03px;font-size:16.5px;line-height:16.5px;color:#000;white-space:pre;left:875.80px;">$</div>
<div style="position:absolute;top:390.03px;font-size:16.5px;line-height:16.5px;color:#000;white-space:pre;letter-spacing:0.521px;left:955.10px;">3.00</div>
<div style="position:absolute;top:390.03px;font-size:16.5px;line-height:16.5px;color:#000;white-space:pre;left:1008.30px;">$</div>
<div style="position:absolute;top:390.03px;font-size:16.5px;line-height:16.5px;color:#000;white-space:pre;letter-spacing:0.482px;left:1052.80px;">350.00</div>
<div style="position:absolute;top:390.03px;font-size:16.5px;line-height:16.5px;color:#000;white-space:pre;left:1125.50px;">$</div>
<div style="position:absolute;top:390.03px;font-size:16.5px;line-height:16.5px;color:#000;white-space:pre;letter-spacing:0.591px;left:1145.70px;">5,29,550.00</div>
<div style="position:absolute;top:390.03px;font-size:16.5px;line-height:16.5px;color:#000;white-space:pre;left:1258.50px;">$</div>
<div style="position:absolute;top:390.03px;font-size:16.5px;line-height:16.5px;color:#000;white-space:pre;left:1331.00px;">-</div>
<div style="position:absolute;top:390.03px;font-size:16.5px;line-height:16.5px;color:#000;white-space:pre;left:1375.30px;">$</div>
<div style="position:absolute;top:390.03px;font-size:16.5px;line-height:16.5px;color:#000;white-space:pre;letter-spacing:0.591px;left:1428.50px;">5,29,550.00</div>
<svg style="left:0;top:0" width="1700" height="945"><path d="M1548.40 392.20L1547.20 403.90M1552.30 392.20L1550.90 403.90M1545.90 395.40h7.85M1545.20 400.40h7.6M1557.46 392.20L1556.26 403.90M1561.36 392.20L1559.96 403.90M1554.96 395.40h7.85M1554.26 400.40h7.6M1566.52 392.20L1565.32 403.90M1570.42 392.20L1569.02 403.90M1564.02 395.40h7.85M1563.32 400.40h7.6M1575.58 392.20L1574.38 403.90M1579.48 392.20L1578.08 403.90M1573.08 395.40h7.85M1572.38 400.40h7.6M1584.64 392.20L1583.44 403.90M1588.54 392.20L1587.14 403.90M1582.14 395.40h7.85M1581.44 400.40h7.6M1593.70 392.20L1592.50 403.90M1597.60 392.20L1596.20 403.90M1591.20 395.40h7.85M1590.50 400.40h7.6M1602.76 392.20L1601.56 403.90M1606.66 392.20L1605.26 403.90M1600.26 395.40h7.85M1599.56 400.40h7.6M1611.82 392.20L1610.62 403.90M1615.72 392.20L1614.32 403.90M1609.32 395.40h7.85M1608.62 400.40h7.6M1620.88 392.20L1619.68 403.90M1624.78 392.20L1623.38 403.90M1618.38 395.40h7.85M1617.68 400.40h7.6M1629.94 392.20L1628.74 403.90M1633.84 392.20L1632.44 403.90M1627.44 395.40h7.85M1626.74 400.40h7.6" stroke="#111" stroke-width="1.35" fill="none"/></svg>
<div style="position:absolute;top:390.03px;font-size:16.5px;line-height:16.5px;color:#000;white-space:pre;left:1649.50px;">$</div>
<div style="position:absolute;top:390.03px;font-size:16.5px;line-height:16.5px;color:#000;white-space:pre;letter-spacing:0.691px;left:1708.60px;">1,36,170.00</div>
<div style="position:absolute;top:390.03px;font-size:16.5px;line-height:16.5px;color:#000;white-space:pre;letter-spacing:0.356px;left:1825.00px;">01-12-2014</div>
<div style="position:absolute;top:415.03px;font-size:16.5px;line-height:16.5px;color:#000;white-space:pre;letter-spacing:1.034px;left:39.40px;">Midmarket</div>
<div style="position:absolute;top:415.03px;font-size:16.5px;line-height:16.5px;color:#000;white-space:pre;letter-spacing:0.172px;left:193.00px;">Germany</div>
<div style="position:absolute;top:415.03px;font-size:16.5px;line-height:16.5px;color:#000;white-space:pre;letter-spacing:0.904px;left:446.50px;">Montana</div>
<div style="position:absolute;top:415.03px;font-size:16.5px;line-height:16.5px;color:#000;white-space:pre;letter-spacing:0.688px;left:578.80px;">None</div>
<div style="position:absolute;top:415.03px;font-size:16.5px;line-height:16.5px;color:#000;white-space:pre;letter-spacing:0.223px;left:833.00px;">921</div>
<div style="position:absolute;top:415.03px;font-size:16.5px;line-height:16.5px;color:#000;white-space:pre;left:875.80px;">$</div>
<div style="position:absolute;top:415.03px;font-size:16.5px;line-height:16.5px;color:#000;white-space:pre;letter-spacing:0.521px;left:955.10px;">5.00</div>
<div style="position:absolute;top:415.03px;font-size:16.5px;line-height:16.5px;color:#000;white-space:pre;left:1008.30px;">$</div>
<div style="position:absolute;top:415.03px;font-size:16.5px;line-height:16.5px;color:#000;white-space:pre;letter-spacing:0.747px;left:1061.40px;">15.00</div>
<div style="position:absolute;top:415.03px;font-size:16.5px;line-height:16.5px;color:#000;white-space:pre;left:1125.50px;">$</div>
<div style="position:absolute;top:415.03px;font-size:16.5px;line-height:16.5px;color:#000;white-space:pre;letter-spacing:0.672px;left:1160.00px;">13,815.00</div>
<div style="position:absolute;top:415.03px;font-size:16.5px;line-height:16.5px;color:#000;white-space:pre;left:1258.50px;">$</div>
<div style="position:absolute;top:415.03px;font-size:16.5px;line-height:16.5px;color:#000;white-space:pre;left:1331.00px;">-</div>
<div style="position:absolute;top:415.03px;font-size:16.5px;line-height:16.5px;color:#000;white-space:pre;left:1375.30px;">$</div>
<div style="position:absolute;top:415.03px;font-size:16.5px;line-height:16.5px;color:#000;white-space:pre;letter-spacing:0.672px;left:1442.80px;">13,815.00</div>
<div style="position:absolute;top:415.03px;font-size:16.5px;line-height:16.5px;color:#000;white-space:pre;left:1541.30px;">$</div>
<div style="position:absolute;top:415.03px;font-size:16.5px;line-height:16.5px;color:#000;white-space:pre;letter-spacing:0.564px;left:1561.50px;">9,210.00</div>
<div style="position:absolute;top:415.03px;font-size:16.5px;line-height:16.5px;color:#000;white-space:pre;left:1649.50px;">$</div>
<div style="position:absolute;top:415.03px;font-size:16.5px;line-height:16.5px;color:#000;white-space:pre;letter-spacing:0.564px;left:1734.50px;">4,605.00</div>
<div style="position:absolute;top:415.03px;font-size:16.5px;line-height:16.5px;color:#000;white-space:pre;letter-spacing:0.356px;left:1825.00px;">01-03-2014</div>
<div style="position:absolute;top:440.03px;font-size:16.5px;line-height:16.5px;color:#000;white-space:pre;letter-spacing:0.226px;left:40.40px;">Channel Partners</div>
<div style="position:absolute;top:440.03px;font-size:16.5px;line-height:16.5px;color:#000;white-space:pre;letter-spacing:-0.518px;left:193.00px;">Canada</div>
<div style="position:absolute;top:440.03px;font-size:16.5px;line-height:16.5px;color:#000;white-space:pre;letter-spacing:0.904px;left:446.50px;">Montana</div>
<div style="position:absolute;top:440.03px;font-size:16.5px;line-height:16.5px;color:#000;white-space:pre;letter-spacing:0.688px;left:578.80px;">None</div>
<div style="position:absolute;top:440.03px;font-size:16.5px;line-height:16.5px;color:#000;white-space:pre;letter-spacing:0.290px;left:823.40px;">2518</div>
<div style="position:absolute;top:440.03px;font-size:16.5px;line-height:16.5px;color:#000;white-space:pre;left:875.80px;">$</div>
<div style="position:absolute;top:440.03px;font-size:16.5px;line-height:16.5px;color:#000;white-space:pre;letter-spacing:0.521px;left:955.10px;">5.00</div>
<div style="position:absolute;top:440.03px;font-size:16.5px;line-height:16.5px;color:#000;white-space:pre;left:1008.30px;">$</div>
<div style="position:absolute;top:440.03px;font-size:16.5px;line-height:16.5px;color:#000;white-space:pre;letter-spacing:0.747px;left:1061.40px;">12.00</div>
<div style="position:absolute;top:440.03px;font-size:16.5px;line-height:16.5px;color:#000;white-space:pre;left:1125.50px;">$</div>
<div style="position:absolute;top:440.03px;font-size:16.5px;line-height:16.5px;color:#000;white-space:pre;letter-spacing:0.547px;left:1161.00px;">30,216.00</div>
<div style="position:absolute;top:440.03px;font-size:16.5px;line-height:16.5px;color:#000;white-space:pre;left:1258.50px;">$</div>
<div style="position:absolute;top:440.03px;font-size:16.5px;line-height:16.5px;color:#000;white-space:pre;left:1331.00px;">-</div>
<div style="position:absolute;top:440.03px;font-size:16.5px;line-height:16.5px;color:#000;white-space:pre;left:1375.30px;">$</div>
<div style="position:absolute;top:440.03px;font-size:16.5px;line-height:16.5px;color:#000;white-space:pre;letter-spacing:0.547px;left:1443.80px;">30,216.00</div>
<div style="position:absolute;top:440.03px;font-size:16.5px;line-height:16.5px;color:#000;white-space:pre;left:1541.30px;">$</div>
<div style="position:absolute;top:440.03px;font-size:16.5px;line-height:16.5px;color:#000;white-space:pre;letter-spacing:0.564px;left:1561.50px;">7,554.00</div>
<div style="position:absolute;top:440.03px;font-size:16.5px;line-height:16.5px;color:#000;white-space:pre;left:1649.50px;">$</div>
<div style="position:absolute;top:440.03px;font-size:16.5px;line-height:16.5px;color:#000;white-space:pre;letter-spacing:0.547px;left:1724.90px;">22,662.00</div>
<div style="position:absolute;top:440.03px;font-size:16.5px;line-height:16.5px;color:#000;white-space:pre;letter-spacing:0.356px;left:1825.00px;">01-06-2014</div>
<div style="position:absolute;top:465.03px;font-size:16.5px;line-height:16.5px;color:#000;white-space:pre;letter-spacing:0.577px;left:40.40px;">Government</div>
<div style="position:absolute;top:465.03px;font-size:16.5px;line-height:16.5px;color:#000;white-space:pre;letter-spacing:0.077px;left:192.00px;">France</div>
<div style="position:absolute;top:465.03px;font-size:16.5px;line-height:16.5px;color:#000;white-space:pre;letter-spacing:0.904px;left:446.50px;">Montana</div>
<div style="position:absolute;top:465.03px;font-size:16.5px;line-height:16.5px;color:#000;white-space:pre;letter-spacing:0.688px;left:578.80px;">None</div>
<div style="position:absolute;top:465.03px;font-size:16.5px;line-height:16.5px;color:#000;white-space:pre;letter-spacing:0.623px;left:822.40px;">1899</div>
<div style="position:absolute;top:465.03px;font-size:16.5px;line-height:16.5px;color:#000;white-space:pre;left:875.80px;">$</div>
<div style="position:absolute;top:465.03px;font-size:16.5px;line-height:16.5px;color:#000;white-space:pre;letter-spacing:0.521px;left:955.10px;">5.00</div>
<div style="position:absolute;top:465.03px;font-size:16.5px;line-height:16.5px;color:#000;white-space:pre;left:1008.30px;">$</div>
<div style="position:absolute;top:465.03px;font-size:16.5px;line-height:16.5px;color:#000;white-space:pre;letter-spacing:0.497px;left:1062.40px;">20.00</div>
<div style="position:absolute;top:465.03px;font-size:16.5px;line-height:16.5px;color:#000;white-space:pre;left:1125.50px;">$</div>
<div style="position:absolute;top:465.03px;font-size:16.5px;line-height:16.5px;color:#000;white-space:pre;letter-spacing:0.547px;left:1161.00px;">37,980.00</div>
<div style="position:absolute;top:465.03px;font-size:16.5px;line-height:16.5px;color:#000;white-space:pre;left:1258.50px;">$</div>
<div style="position:absolute;top:465.03px;font-size:16.5px;line-height:16.5px;color:#000;white-space:pre;left:1331.00px;">-</div>
<div style="position:absolute;top:465.03px;font-size:16.5px;line-height:16.5px;color:#000;white-space:pre;left:1375.30px;">$</div>
<div style="position:absolute;top:465.03px;font-size:16.5px;line-height:16.5px;color:#000;white-space:pre;letter-spacing:0.547px;left:1443.80px;">37,980.00</div>
<svg style="left:0;top:0" width="1700" height="945"><path d="M1548.40 467.20L1547.20 478.90M1552.30 467.20L1550.90 478.90M1545.90 470.40h7.85M1545.20 475.40h7.6M1557.46 467.20L1556.26 478.90M1561.36 467.20L1559.96 478.90M1554.96 470.40h7.85M1554.26 475.40h7.6M1566.52 467.20L1565.32 478.90M1570.42 467.20L1569.02 478.90M1564.02 470.40h7.85M1563.32 475.40h7.6M1575.58 467.20L1574.38 478.90M1579.48 467.20L1578.08 478.90M1573.08 470.40h7.85M1572.38 475.40h7.6M1584.64 467.20L1583.44 478.90M1588.54 467.20L1587.14 478.90M1582.14 470.40h7.85M1581.44 475.40h7.6M1593.70 467.20L1592.50 478.90M1597.60 467.20L1596.20 478.90M1591.20 470.40h7.85M1590.50 475.40h7.6M1602.76 467.20L1601.56 478.90M1606.66 467.20L1605.26 478.90M1600.26 470.40h7.85M1599.56 475.40h7.6M1611.82 467.20L1610.62 478.90M1615.72 467.20L1614.32 478.90M1609.32 470.40h7.85M1608.62 475.40h7.6M1620.88 467.20L1619.68 478.90M1624.78 467.20L1623.38 478.90M1618.38 470.40h7.85M1617.68 475.40h7.6M1629.94 467.20L1628.74 478.90M1633.84 467.20L1632.44 478.90M1627.44 470.40h7.85M1626.74 475.40h7.6" stroke="#111" stroke-width="1.35" fill="none"/></svg>
<div style="position:absolute;top:465.03px;font-size:16.5px;line-height:16.5px;color:#000;white-space:pre;left:1649.50px;">$</div>
<div style="position:absolute;top:465.03px;font-size:16.5px;line-height:16.5px;color:#000;white-space:pre;letter-spacing:0.672px;left:1723.90px;">18,990.00</div>
<div style="position:absolute;top:465.03px;font-size:16.5px;line-height:16.5px;color:#000;white-space:pre;letter-spacing:0.356px;left:1825.00px;">01-06-2014</div>
<div style="position:absolute;top:490.03px;font-size:16.5px;line-height:16.5px;color:#000;white-space:pre;letter-spacing:0.226px;left:40.40px;">Channel Partners</div>
<div style="position:absolute;top:490.03px;font-size:16.5px;line-height:16.5px;color:#000;white-space:pre;letter-spacing:0.172px;left:193.00px;">Germany</div>
<div style="position:absolute;top:490.03px;font-size:16.5px;line-height:16.5px;color:#000;white-space:pre;letter-spacing:0.904px;left:446.50px;">Montana</div>
<div style="position:absolute;top:490.03px;font-size:16.5px;line-height:16.5px;color:#000;white-space:pre;letter-spacing:0.688px;left:578.80px;">None</div>
<div style="position:absolute;top:490.03px;font-size:16.5px;line-height:16.5px;color:#000;white-space:pre;letter-spacing:0.623px;left:822.40px;">1545</div>
<div style="position:absolute;top:490.03px;font-size:16.5px;line-height:16.5px;color:#000;white-space:pre;left:875.80px;">$</div>
<div style="position:absolute;top:490.03px;font-size:16.5px;line-height:16.5px;color:#000;white-space:pre;letter-spacing:0.521px;left:955.10px;">5.00</div>
<div style="position:absolute;top:490.03px;font-size:16.5px;line-height:16.5px;color:#000;white-space:pre;left:1008.30px;">$</div>
<div style="position:absolute;top:490.03px;font-size:16.5px;line-height:16.5px;color:#000;white-space:pre;letter-spacing:0.747px;left:1061.40px;">12.00</div>
<div style="position:absolute;top:490.03px;font-size:16.5px;line-height:16.5px;color:#000;white-space:pre;left:1125.50px;">$</div>
<div style="position:absolute;top:490.03px;font-size:16.5px;line-height:16.5px;color:#000;white-space:pre;letter-spacing:0.672px;left:1160.00px;">18,540.00</div>
<div style="position:absolute;top:490.03px;font-size:16.5px;line-height:16.5px;color:#000;white-space:pre;left:1258.50px;">$</div>
<div style="position:absolute;top:490.03px;font-size:16.5px;line-height:16.5px;color:#000;white-space:pre;left:1331.00px;">-</div>
<div style="position:absolute;top:490.03px;font-size:16.5px;line-height:16.5px;color:#000;white-space:pre;left:1375.30px;">$</div>
<div style="position:absolute;top:490.03px;font-size:16.5px;line-height:16.5px;color:#000;white-space:pre;letter-spacing:0.672px;left:1442.80px;">18,540.00</div>
<div style="position:absolute;top:490.03px;font-size:16.5px;line-height:16.5px;color:#000;white-space:pre;left:1541.30px;">$</div>
<div style="position:absolute;top:490.03px;font-size:16.5px;line-height:16.5px;color:#000;white-space:pre;letter-spacing:0.564px;left:1561.50px;">4,635.00</div>
<div style="position:absolute;top:490.03px;font-size:16.5px;line-height:16.5px;color:#000;white-space:pre;left:1649.50px;">$</div>
<div style="position:absolute;top:490.03px;font-size:16.5px;line-height:16.5px;color:#000;white-space:pre;letter-spacing:0.672px;left:1723.90px;">13,905.00</div>
<div style="position:absolute;top:490.03px;font-size:16.5px;line-height:16.5px;color:#000;white-space:pre;letter-spacing:0.356px;left:1825.00px;">01-06-2014</div>
<div style="position:absolute;top:515.03px;font-size:16.5px;line-height:16.5px;color:#000;white-space:pre;letter-spacing:1.034px;left:39.40px;">Midmarket</div>
<div style="position:absolute;top:515.03px;font-size:16.5px;line-height:16.5px;color:#000;white-space:pre;letter-spacing:0.783px;left:192.00px;">Mexico</div>
<div style="position:absolute;top:515.03px;font-size:16.5px;line-height:16.5px;color:#000;white-space:pre;letter-spacing:0.904px;left:446.50px;">Montana</div>
<div style="position:absolute;top:515.03px;font-size:16.5px;line-height:16.5px;color:#000;white-space:pre;letter-spacing:0.688px;left:578.80px;">None</div>
<div style="position:absolute;top:515.03px;font-size:16.5px;line-height:16.5px;color:#000;white-space:pre;letter-spacing:0.290px;left:823.40px;">2470</div>
<div style="position:absolute;top:515.03px;font-size:16.5px;line-height:16.5px;color:#000;white-space:pre;left:875.80px;">$</div>
<div style="position:absolute;top:515.03px;font-size:16.5px;line-height:16.5px;color:#000;white-space:pre;letter-spacing:0.521px;left:955.10px;">5.00</div>
<div style="position:absolute;top:515.03px;font-size:16.5px;line-height:16.5px;color:#000;white-space:pre;left:1008.30px;">$</div>
<div style="position:absolute;top:515.03px;font-size:16.5px;line-height:16.5px;color:#000;white-space:pre;letter-spacing:0.747px;left:1061.40px;">15.00</div>
<div style="position:absolute;top:515.03px;font-size:16.5px;line-height:16.5px;color:#000;white-space:pre;left:1125.50px;">$</div>
<div style="position:absolute;top:515.03px;font-size:16.5px;line-height:16.5px;color:#000;white-space:pre;letter-spacing:0.547px;left:1161.00px;">37,050.00</div>
<div style="position:absolute;top:515.03px;font-size:16.5px;line-height:16.5px;color:#000;white-space:pre;left:1258.50px;">$</div>
<div style="position:absolute;top:515.03px;font-size:16.5px;line-height:16.5px;color:#000;white-space:pre;left:1331.00px;">-</div>
<div style="position:absolute;top:515.03px;font-size:16.5px;line-height:16.5px;color:#000;white-space:pre;left:1375.30px;">$</div>
<div style="position:absolute;top:515.03px;font-size:16.5px;line-height:16.5px;color:#000;white-space:pre;letter-spacing:0.547px;left:1443.80px;">37,050.00</div>
<svg style="left:0;top:0" width="1700" height="945"><path d="M1548.40 517.20L1547.20 528.90M1552.30 517.20L1550.90 528.90M1545.90 520.40h7.85M1545.20 525.40h7.6M1557.46 517.20L1556.26 528.90M1561.36 517.20L1559.96 528.90M1554.96 520.40h7.85M1554.26 525.40h7.6M1566.52 517.20L1565.32 528.90M1570.42 517.20L1569.02 528.90M1564.02 520.40h7.85M1563.32 525.40h7.6M1575.58 517.20L1574.38 528.90M1579.48 517.20L1578.08 528.90M1573.08 520.40h7.85M1572.38 525.40h7.6M1584.64 517.20L1583.44 528.90M1588.54 517.20L1587.14 528.90M1582.14 520.40h7.85M1581.44 525.40h7.6M1593.70 517.20L1592.50 528.90M1597.60 517.20L1596.20 528.90M1591.20 520.40h7.85M1590.50 525.40h7.6M1602.76 517.20L1601.56 528.90M1606.66 517.20L1605.26 528.90M1600.26 520.40h7.85M1599.56 525.40h7.6M1611.82 517.20L1610.62 528.90M1615.72 517.20L1614.32 528.90M1609.32 520.40h7.85M1608.62 525.40h7.6M1620.88 517.20L1619.68 528.90M1624.78 517.20L1623.38 528.90M1618.38 520.40h7.85M1617.68 525.40h7.6M1629.94 517.20L1628.74 528.90M1633.84 517.20L1632.44 528.90M1627.44 520.40h7.85M1626.74 525.40h7.6" stroke="#111" stroke-width="1.35" fill="none"/></svg>
<div style="position:absolute;top:515.03px;font-size:16.5px;line-height:16.5px;color:#000;white-space:pre;left:1649.50px;">$</div>
<div style="position:absolute;top:515.03px;font-size:16.5px;line-height:16.5px;color:#000;white-space:pre;letter-spacing:0.672px;left:1723.90px;">12,350.00</div>
<div style="position:absolute;top:515.03px;font-size:16.5px;line-height:16.5px;color:#000;white-space:pre;letter-spacing:0.356px;left:1825.00px;">01-06-2014</div>
<div style="position:absolute;top:540.03px;font-size:16.5px;line-height:16.5px;color:#000;white-space:pre;letter-spacing:0.473px;left:39.40px;">Enterprise</div>
<div style="position:absolute;top:540.03px;font-size:16.5px;line-height:16.5px;color:#000;white-space:pre;letter-spacing:-0.518px;left:193.00px;">Canada</div>
<div style="position:absolute;top:540.03px;font-size:16.5px;line-height:16.5px;color:#000;white-space:pre;letter-spacing:0.904px;left:446.50px;">Montana</div>
<div style="position:absolute;top:540.03px;font-size:16.5px;line-height:16.5px;color:#000;white-space:pre;letter-spacing:0.688px;left:578.80px;">None</div>
<div style="position:absolute;top:540.03px;font-size:16.5px;line-height:16.5px;color:#000;white-space:pre;letter-spacing:0.482px;left:808.10px;">2665.5</div>
<div style="position:absolute;top:540.03px;font-size:16.5px;line-height:16.5px;color:#000;white-space:pre;left:875.80px;">$</div>
<div style="position:absolute;top:540.03px;font-size:16.5px;line-height:16.5px;color:#000;white-space:pre;letter-spacing:0.521px;left:955.10px;">5.00</div>
<div style="position:absolute;top:540.03px;font-size:16.5px;line-height:16.5px;color:#000;white-space:pre;left:1008.30px;">$</div>
<div style="position:absolute;top:540.03px;font-size:16.5px;line-height:16.5px;color:#000;white-space:pre;letter-spacing:0.682px;left:1051.80px;">125.00</div>
<div style="position:absolute;top:540.03px;font-size:16.5px;line-height:16.5px;color:#000;white-space:pre;left:1125.50px;">$</div>
<div style="position:absolute;top:540.03px;font-size:16.5px;line-height:16.5px;color:#000;white-space:pre;letter-spacing:0.591px;left:1145.70px;">3,33,187.50</div>
<div style="position:absolute;top:540.03px;font-size:16.5px;line-height:16.5px;color:#000;white-space:pre;left:1258.50px;">$</div>
<div style="position:absolute;top:540.03px;font-size:16.5px;line-height:16.5px;color:#000;white-space:pre;left:1331.00px;">-</div>
<div style="position:absolute;top:540.03px;font-size:16.5px;line-height:16.5px;color:#000;white-space:pre;left:1375.30px;">$</div>
<div style="position:absolute;top:540.03px;font-size:16.5px;line-height:16.5px;color:#000;white-space:pre;letter-spacing:0.591px;left:1428.50px;">3,33,187.50</div>
<svg style="left:0;top:0" width="1700" height="945"><path d="M1548.40 542.20L1547.20 553.90M1552.30 542.20L1550.90 553.90M1545.90 545.40h7.85M1545.20 550.40h7.6M1557.46 542.20L1556.26 553.90M1561.36 542.20L1559.96 553.90M1554.96 545.40h7.85M1554.26 550.40h7.6M1566.52 542.20L1565.32 553.90M1570.42 542.20L1569.02 553.90M1564.02 545.40h7.85M1563.32 550.40h7.6M1575.58 542.20L1574.38 553.90M1579.48 542.20L1578.08 553.90M1573.08 545.40h7.85M1572.38 550.40h7.6M1584.64 542.20L1583.44 553.90M1588.54 542.20L1587.14 553.90M1582.14 545.40h7.85M1581.44 550.40h7.6M1593.70 542.20L1592.50 553.90M1597.60 542.20L1596.20 553.90M1591.20 545.40h7.85M1590.50 550.40h7.6M1602.76 542.20L1601.56 553.90M1606.66 542.20L1605.26 553.90M1600.26 545.40h7.85M1599.56 550.40h7.6M1611.82 542.20L1610.62 553.90M1615.72 542.20L1614.32 553.90M1609.32 545.40h7.85M1608.62 550.40h7.6M1620.88 542.20L1619.68 553.90M1624.78 542.20L1623.38 553.90M1618.38 545.40h7.85M1617.68 550.40h7.6M1629.94 542.20L1628.74 553.90M1633.84 542.20L1632.44 553.90M1627.44 545.40h7.85M1626.74 550.40h7.6" stroke="#111" stroke-width="1.35" fill="none"/></svg>
<div style="position:absolute;top:540.03px;font-size:16.5px;line-height:16.5px;color:#000;white-space:pre;left:1649.50px;">$</div>
<div style="position:absolute;top:540.03px;font-size:16.5px;line-height:16.5px;color:#000;white-space:pre;letter-spacing:0.672px;left:1723.90px;">13,327.50</div>
<div style="position:absolute;top:540.03px;font-size:16.5px;line-height:16.5px;color:#000;white-space:pre;letter-spacing:0.356px;left:1825.00px;">01-07-2014</div>
<div style="position:absolute;top:565.03px;font-size:16.5px;line-height:16.5px;color:#000;white-space:pre;letter-spacing:-0.100px;left:40.40px;">Small Business</div>
<div style="position:absolute;top:565.03px;font-size:16.5px;line-height:16.5px;color:#000;white-space:pre;letter-spacing:0.783px;left:192.00px;">Mexico</div>
<div style="position:absolute;top:565.03px;font-size:16.5px;line-height:16.5px;color:#000;white-space:pre;letter-spacing:0.904px;left:446.50px;">Montana</div>
<div style="position:absolute;top:565.03px;font-size:16.5px;line-height:16.5px;color:#000;white-space:pre;letter-spacing:0.688px;left:578.80px;">None</div>
<div style="position:absolute;top:565.03px;font-size:16.5px;line-height:16.5px;color:#000;white-space:pre;letter-spacing:0.223px;left:833.00px;">958</div>
<div style="position:absolute;top:565.03px;font-size:16.5px;line-height:16.5px;color:#000;white-space:pre;left:875.80px;">$</div>
<div style="position:absolute;top:565.03px;font-size:16.5px;line-height:16.5px;color:#000;white-space:pre;letter-spacing:0.521px;left:955.10px;">5.00</div>
<div style="position:absolute;top:565.03px;font-size:16.5px;line-height:16.5px;color:#000;white-space:pre;left:1008.30px;">$</div>
<div style="position:absolute;top:565.03px;font-size:16.5px;line-height:16.5px;color:#000;white-space:pre;letter-spacing:0.482px;left:1052.80px;">300.00</div>
<div style="position:absolute;top:565.03px;font-size:16.5px;line-height:16.5px;color:#000;white-space:pre;left:1125.50px;">$</div>
<div style="position:absolute;top:565.03px;font-size:16.5px;line-height:16.5px;color:#000;white-space:pre;letter-spacing:0.591px;left:1145.70px;">2,87,400.00</div>
<div style="position:absolute;top:565.03px;font-size:16.5px;line-height:16.5px;color:#000;white-space:pre;left:1258.50px;">$</div>
<div style="position:absolute;top:565.03px;font-size:16.5px;line-height:16.5px;color:#000;white-space:pre;left:1331.00px;">-</div>
<div style="position:absolute;top:565.03px;font-size:16.5px;line-height:16.5px;color:#000;white-space:pre;left:1375.30px;">$</div>
<div style="position:absolute;top:565.03px;font-size:16.5px;line-height:16.5px;color:#000;white-space:pre;letter-spacing:0.591px;left:1428.50px;">2,87,400.00</div>
<svg style="left:0;top:0" width="1700" height="945"><path d="M1548.40 567.20L1547.20 578.90M1552.30 567.20L1550.90 578.90M1545.90 570.40h7.85M1545.20 575.40h7.6M1557.46 567.20L1556.26 578.90M1561.36 567.20L1559.96 578.90M1554.96 570.40h7.85M1554.26 575.40h7.6M1566.52 567.20L1565.32 578.90M1570.42 567.20L1569.02 578.90M1564.02 570.40h7.85M1563.32 575.40h7.6M1575.58 567.20L1574.38 578.90M1579.48 567.20L1578.08 578.90M1573.08 570.40h7.85M1572.38 575.40h7.6M1584.64 567.20L1583.44 578.90M1588.54 567.20L1587.14 578.90M1582.14 570.40h7.85M1581.44 575.40h7.6M1593.70 567.20L1592.50 578.90M1597.60 567.20L1596.20 578.90M1591.20 570.40h7.85M1590.50 575.40h7.6M1602.76 567.20L1601.56 578.90M1606.66 567.20L1605.26 578.90M1600.26 570.40h7.85M1599.56 575.40h7.6M1611.82 567.20L1610.62 578.90M1615.72 567.20L1614.32 578.90M1609.32 570.40h7.85M1608.62 575.40h7.6M1620.88 567.20L1619.68 578.90M1624.78 567.20L1623.38 578.90M1618.38 570.40h7.85M1617.68 575.40h7.6M1629.94 567.20L1628.74 578.90M1633.84 567.20L1632.44 578.90M1627.44 570.40h7.85M1626.74 575.40h7.6" stroke="#111" stroke-width="1.35" fill="none"/></svg>
<div style="position:absolute;top:565.03px;font-size:16.5px;line-height:16.5px;color:#000;white-space:pre;left:1649.50px;">$</div>
<div style="position:absolute;top:565.03px;font-size:16.5px;line-height:16.5px;color:#000;white-space:pre;letter-spacing:0.547px;left:1724.90px;">47,900.00</div>
<div style="position:absolute;top:565.03px;font-size:16.5px;line-height:16.5px;color:#000;white-space:pre;letter-spacing:0.356px;left:1825.00px;">01-08-2014</div>
<div style="position:absolute;top:590.03px;font-size:16.5px;line-height:16.5px;color:#000;white-space:pre;letter-spacing:0.577px;left:40.40px;">Government</div>
<div style="position:absolute;top:590.03px;font-size:16.5px;line-height:16.5px;color:#000;white-space:pre;letter-spacing:0.172px;left:193.00px;">Germany</div>
<div style="position:absolute;top:590.03px;font-size:16.5px;line-height:16.5px;color:#000;white-space:pre;letter-spacing:0.904px;left:446.50px;">Montana</div>
<div style="position:absolute;top:590.03px;font-size:16.5px;line-height:16.5px;color:#000;white-space:pre;letter-spacing:0.688px;left:578.80px;">None</div>
<div style="position:absolute;top:590.03px;font-size:16.5px;line-height:16.5px;color:#000;white-space:pre;letter-spacing:0.290px;left:823.40px;">2146</div>
<div style="position:absolute;top:590.03px;font-size:16.5px;line-height:16.5px;color:#000;white-space:pre;left:875.80px;">$</div>
<div style="position:absolute;top:590.03px;font-size:16.5px;line-height:16.5px;color:#000;white-space:pre;letter-spacing:0.521px;left:955.10px;">5.00</div>
<div style="position:absolute;top:590.03px;font-size:16.5px;line-height:16.5px;color:#000;white-space:pre;left:1008.30px;">$</div>
<div style="position:absolute;top:590.03px;font-size:16.5px;line-height:16.5px;color:#000;white-space:pre;letter-spacing:0.521px;left:1072.00px;">7.00</div>
<div style="position:absolute;top:590.03px;font-size:16.5px;line-height:16.5px;color:#000;white-space:pre;left:1125.50px;">$</div>
<div style="position:absolute;top:590.03px;font-size:16.5px;line-height:16.5px;color:#000;white-space:pre;letter-spacing:0.672px;left:1160.00px;">15,022.00</div>
<div style="position:absolute;top:590.03px;font-size:16.5px;line-height:16.5px;color:#000;white-space:pre;left:1258.50px;">$</div>
<div style="position:absolute;top:590.03px;font-size:16.5px;line-height:16.5px;color:#000;white-space:pre;left:1331.00px;">-</div>
<div style="position:absolute;top:590.03px;font-size:16.5px;line-height:16.5px;color:#000;white-space:pre;left:1375.30px;">$</div>
<div style="position:absolute;top:590.03px;font-size:16.5px;line-height:16.5px;color:#000;white-space:pre;letter-spacing:0.672px;left:1442.80px;">15,022.00</div>
<svg style="left:0;top:0" width="1700" height="945"><path d="M1548.40 592.20L1547.20 603.90M1552.30 592.20L1550.90 603.90M1545.90 595.40h7.85M1545.20 600.40h7.6M1557.46 592.20L1556.26 603.90M1561.36 592.20L1559.96 603.90M1554.96 595.40h7.85M1554.26 600.40h7.6M1566.52 592.20L1565.32 603.90M1570.42 592.20L1569.02 603.90M1564.02 595.40h7.85M1563.32 600.40h7.6M1575.58 592.20L1574.38 603.90M1579.48 592.20L1578.08 603.90M1573.08 595.40h7.85M1572.38 600.40h7.6M1584.64 592.20L1583.44 603.90M1588.54 592.20L1587.14 603.90M1582.14 595.40h7.85M1581.44 600.40h7.6M1593.70 592.20L1592.50 603.90M1597.60 592.20L1596.20 603.90M1591.20 595.40h7.85M1590.50 600.40h7.6M1602.76 592.20L1601.56 603.90M1606.66 592.20L1605.26 603.90M1600.26 595.40h7.85M1599.56 600.40h7.6M1611.82 592.20L1610.62 603.90M1615.72 592.20L1614.32 603.90M1609.32 595.40h7.85M1608.62 600.40h7.6M1620.88 592.20L1619.68 603.90M1624.78 592.20L1623.38 603.90M1618.38 595.40h7.85M1617.68 600.40h7.6M1629.94 592.20L1628.74 603.90M1633.84 592.20L1632.44 603.90M1627.44 595.40h7.85M1626.74 600.40h7.6" stroke="#111" stroke-width="1.35" fill="none"/></svg>
<div style="position:absolute;top:590.03px;font-size:16.5px;line-height:16.5px;color:#000;white-space:pre;left:1649.50px;">$</div>
<div style="position:absolute;top:590.03px;font-size:16.5px;line-height:16.5px;color:#000;white-space:pre;letter-spacing:0.564px;left:1734.50px;">4,292.00</div>
<div style="position:absolute;top:590.03px;font-size:16.5px;line-height:16.5px;color:#000;white-space:pre;letter-spacing:0.356px;left:1825.00px;">01-09-2014</div>
<div style="position:absolute;top:615.03px;font-size:16.5px;line-height:16.5px;color:#000;white-space:pre;letter-spacing:0.473px;left:39.40px;">Enterprise</div>
<div style="position:absolute;top:615.03px;font-size:16.5px;line-height:16.5px;color:#000;white-space:pre;letter-spacing:-0.518px;left:193.00px;">Canada</div>
<div style="position:absolute;top:615.03px;font-size:16.5px;line-height:16.5px;color:#000;white-space:pre;letter-spacing:0.904px;left:446.50px;">Montana</div>
<div style="position:absolute;top:615.03px;font-size:16.5px;line-height:16.5px;color:#000;white-space:pre;letter-spacing:0.688px;left:578.80px;">None</div>
<div style="position:absolute;top:615.03px;font-size:16.5px;line-height:16.5px;color:#000;white-space:pre;letter-spacing:0.223px;left:833.00px;">345</div>
<div style="position:absolute;top:615.03px;font-size:16.5px;line-height:16.5px;color:#000;white-space:pre;left:875.80px;">$</div>
<div style="position:absolute;top:615.03px;font-size:16.5px;line-height:16.5px;color:#000;white-space:pre;letter-spacing:0.521px;left:955.10px;">5.00</div>
<div style="position:absolute;top:615.03px;font-size:16.5px;line-height:16.5px;color:#000;white-space:pre;left:1008.30px;">$</div>
<div style="position:absolute;top:615.03px;font-size:16.5px;line-height:16.5px;color:#000;white-space:pre;letter-spacing:0.682px;left:1051.80px;">125.00</div>
<div style="position:absolute;top:615.03px;font-size:16.5px;line-height:16.5px;color:#000;white-space:pre;left:1125.50px;">$</div>
<div style="position:absolute;top:615.03px;font-size:16.5px;line-height:16.5px;color:#000;white-space:pre;letter-spacing:0.547px;left:1161.00px;">43,125.00</div>
<div style="position:absolute;top:615.03px;font-size:16.5px;line-height:16.5px;color:#000;white-space:pre;left:1258.50px;">$</div>
<div style="position:absolute;top:615.03px;font-size:16.5px;line-height:16.5px;color:#000;white-space:pre;left:1331.00px;">-</div>
<div style="position:absolute;top:615.03px;font-size:16.5px;line-height:16.5px;color:#000;white-space:pre;left:1375.30px;">$</div>
<div style="position:absolute;top:615.03px;font-size:16.5px;line-height:16.5px;color:#000;white-space:pre;letter-spacing:0.547px;left:1443.80px;">43,125.00</div>
<svg style="left:0;top:0" width="1700" height="945"><path d="M1548.40 617.20L1547.20 628.90M1552.30 617.20L1550.90 628.90M1545.90 620.40h7.85M1545.20 625.40h7.6M1557.46 617.20L1556.26 628.90M1561.36 617.20L1559.96 628.90M1554.96 620.40h7.85M1554.26 625.40h7.6M1566.52 617.20L1565.32 628.90M1570.42 617.20L1569.02 628.90M1564.02 620.40h7.85M1563.32 625.40h7.6M1575.58 617.20L1574.38 628.90M1579.48 617.20L1578.08 628.90M1573.08 620.40h7.85M1572.38 625.40h7.6M1584.64 617.20L1583.44 628.90M1588.54 617.20L1587.14 628.90M1582.14 620.40h7.85M1581.44 625.40h7.6M1593.70 617.20L1592.50 628.90M1597.60 617.20L1596.20 628.90M1591.20 620.40h7.85M1590.50 625.40h7.6M1602.76 617.20L1601.56 628.90M1606.66 617.20L1605.26 628.90M1600.26 620.40h7.85M1599.56 625.40h7.6M1611.82 617.20L1610.62 628.90M1615.72 617.20L1614.32 628.90M1609.32 620.40h7.85M1608.62 625.40h7.6M1620.88 617.20L1619.68 628.90M1624.78 617.20L1623.38 628.90M1618.38 620.40h7.85M1617.68 625.40h7.6M1629.94 617.20L1628.74 628.90M1633.84 617.20L1632.44 628.90M1627.44 620.40h7.85M1626.74 625.40h7.6" stroke="#111" stroke-width="1.35" fill="none"/></svg>
<div style="position:absolute;top:615.03px;font-size:16.5px;line-height:16.5px;color:#000;white-space:pre;left:1649.50px;">$</div>
<div style="position:absolute;top:615.03px;font-size:16.5px;line-height:16.5px;color:#000;white-space:pre;letter-spacing:0.707px;left:1733.50px;">1,725.00</div>
<div style="position:absolute;top:615.03px;font-size:16.5px;line-height:16.5px;color:#000;white-space:pre;letter-spacing:0.356px;left:1825.00px;">01-10-2013</div>
<div style="position:absolute;top:640.03px;font-size:16.5px;line-height:16.5px;color:#000;white-space:pre;letter-spacing:1.034px;left:39.40px;">Midmarket</div>
<div style="position:absolute;top:640.03px;font-size:16.5px;line-height:16.5px;color:#000;white-space:pre;letter-spacing:0.389px;left:192.00px;">United States of America</div>
<div style="position:absolute;top:640.03px;font-size:16.5px;line-height:16.5px;color:#000;white-space:pre;letter-spacing:0.904px;left:446.50px;">Montana</div>
<div style="position:absolute;top:640.03px;font-size:16.5px;line-height:16.5px;color:#000;white-space:pre;letter-spacing:0.688px;left:578.80px;">None</div>
<div style="position:absolute;top:640.03px;font-size:16.5px;line-height:16.5px;color:#000;white-space:pre;letter-spacing:0.223px;left:833.00px;">615</div>
<div style="position:absolute;top:640.03px;font-size:16.5px;line-height:16.5px;color:#000;white-space:pre;left:875.80px;">$</div>
<div style="position:absolute;top:640.03px;font-size:16.5px;line-height:16.5px;color:#000;white-space:pre;letter-spacing:0.521px;left:955.10px;">5.00</div>
<div style="position:absolute;top:640.03px;font-size:16.5px;line-height:16.5px;color:#000;white-space:pre;left:1008.30px;">$</div>
<div style="position:absolute;top:640.03px;font-size:16.5px;line-height:16.5px;color:#000;white-space:pre;letter-spacing:0.747px;left:1061.40px;">15.00</div>
<div style="position:absolute;top:640.03px;font-size:16.5px;line-height:16.5px;color:#000;white-space:pre;left:1125.50px;">$</div>
<div style="position:absolute;top:640.03px;font-size:16.5px;line-height:16.5px;color:#000;white-space:pre;letter-spacing:0.564px;left:1170.60px;">9,225.00</div>
<div style="position:absolute;top:640.03px;font-size:16.5px;line-height:16.5px;color:#000;white-space:pre;left:1258.50px;">$</div>
<div style="position:absolute;top:640.03px;font-size:16.5px;line-height:16.5px;color:#000;white-space:pre;left:1331.00px;">-</div>
<div style="position:absolute;top:640.03px;font-size:16.5px;line-height:16.5px;color:#000;white-space:pre;left:1375.30px;">$</div>
<div style="position:absolute;top:640.03px;font-size:16.5px;line-height:16.5px;color:#000;white-space:pre;letter-spacing:0.564px;left:1453.40px;">9,225.00</div>
<div style="position:absolute;top:640.03px;font-size:16.5px;line-height:16.5px;color:#000;white-space:pre;left:1541.30px;">$</div>
<div style="position:absolute;top:640.03px;font-size:16.5px;line-height:16.5px;color:#000;white-space:pre;letter-spacing:0.564px;left:1561.50px;">6,150.00</div>
<div style="position:absolute;top:640.03px;font-size:16.5px;line-height:16.5px;color:#000;white-space:pre;left:1649.50px;">$</div>
<div style="position:absolute;top:640.03px;font-size:16.5px;line-height:16.5px;color:#000;white-space:pre;letter-spacing:0.564px;left:1734.50px;">3,075.00</div>
<div style="position:absolute;top:640.03px;font-size:16.5px;line-height:16.5px;color:#000;white-space:pre;letter-spacing:0.356px;left:1825.00px;">01-12-2014</div>
<div style="position:absolute;top:665.03px;font-size:16.5px;line-height:16.5px;color:#000;white-space:pre;letter-spacing:0.577px;left:40.40px;">Government</div>
<div style="position:absolute;top:665.03px;font-size:16.5px;line-height:16.5px;color:#000;white-space:pre;letter-spacing:-0.518px;left:193.00px;">Canada</div>
<div style="position:absolute;top:665.03px;font-size:16.5px;line-height:16.5px;color:#000;white-space:pre;letter-spacing:-0.290px;left:446.50px;">Paseo</div>
<div style="position:absolute;top:665.03px;font-size:16.5px;line-height:16.5px;color:#000;white-space:pre;letter-spacing:0.688px;left:578.80px;">None</div>
<div style="position:absolute;top:665.03px;font-size:16.5px;line-height:16.5px;color:#000;white-space:pre;letter-spacing:0.223px;left:833.00px;">292</div>
<div style="position:absolute;top:665.03px;font-size:16.5px;line-height:16.5px;color:#000;white-space:pre;left:875.80px;">$</div>
<div style="position:absolute;top:665.03px;font-size:16.5px;line-height:16.5px;color:#000;white-space:pre;letter-spacing:0.747px;left:944.50px;">10.00</div>
<div style="position:absolute;top:665.03px;font-size:16.5px;line-height:16.5px;color:#000;white-space:pre;left:1008.30px;">$</div>
<div style="position:absolute;top:665.03px;font-size:16.5px;line-height:16.5px;color:#000;white-space:pre;letter-spacing:0.497px;left:1062.40px;">20.00</div>
<div style="position:absolute;top:665.03px;font-size:16.5px;line-height:16.5px;color:#000;white-space:pre;left:1125.50px;">$</div>
<div style="position:absolute;top:665.03px;font-size:16.5px;line-height:16.5px;color:#000;white-space:pre;letter-spacing:0.564px;left:1170.60px;">5,840.00</div>
<div style="position:absolute;top:665.03px;font-size:16.5px;line-height:16.5px;color:#000;white-space:pre;left:1258.50px;">$</div>
<div style="position:absolute;top:665.03px;font-size:16.5px;line-height:16.5px;color:#000;white-space:pre;left:1331.00px;">-</div>
<div style="position:absolute;top:665.03px;font-size:16.5px;line-height:16.5px;color:#000;white-space:pre;left:1375.30px;">$</div>
<div style="position:absolute;top:665.03px;font-size:16.5px;line-height:16.5px;color:#000;white-space:pre;letter-spacing:0.564px;left:1453.40px;">5,840.00</div>
<div style="position:absolute;top:665.03px;font-size:16.5px;line-height:16.5px;color:#000;white-space:pre;left:1541.30px;">$</div>
<div style="position:absolute;top:665.03px;font-size:16.5px;line-height:16.5px;color:#000;white-space:pre;letter-spacing:0.564px;left:1561.50px;">2,920.00</div>
<div style="position:absolute;top:665.03px;font-size:16.5px;line-height:16.5px;color:#000;white-space:pre;left:1649.50px;">$</div>
<div style="position:absolute;top:665.03px;font-size:16.5px;line-height:16.5px;color:#000;white-space:pre;letter-spacing:0.564px;left:1734.50px;">2,920.00</div>
<div style="position:absolute;top:665.03px;font-size:16.5px;line-height:16.5px;color:#000;white-space:pre;letter-spacing:0.356px;left:1825.00px;">01-02-2014</div>
<div style="position:absolute;top:690.03px;font-size:16.5px;line-height:16.5px;color:#000;white-space:pre;letter-spacing:1.034px;left:39.40px;">Midmarket</div>
<div style="position:absolute;top:690.03px;font-size:16.5px;line-height:16.5px;color:#000;white-space:pre;letter-spacing:0.783px;left:192.00px;">Mexico</div>
<div style="position:absolute;top:690.03px;font-size:16.5px;line-height:16.5px;color:#000;white-space:pre;letter-spacing:-0.290px;left:446.50px;">Paseo</div>
<div style="position:absolute;top:690.03px;font-size:16.5px;line-height:16.5px;color:#000;white-space:pre;letter-spacing:0.688px;left:578.80px;">None</div>
<div style="position:absolute;top:690.03px;font-size:16.5px;line-height:16.5px;color:#000;white-space:pre;letter-spacing:0.223px;left:833.00px;">974</div>
<div style="position:absolute;top:690.03px;font-size:16.5px;line-height:16.5px;color:#000;white-space:pre;left:875.80px;">$</div>
<div style="position:absolute;top:690.03px;font-size:16.5px;line-height:16.5px;color:#000;white-space:pre;letter-spacing:0.747px;left:944.50px;">10.00</div>
<div style="position:absolute;top:690.03px;font-size:16.5px;line-height:16.5px;color:#000;white-space:pre;left:1008.30px;">$</div>
<div style="position:absolute;top:690.03px;font-size:16.5px;line-height:16.5px;color:#000;white-space:pre;letter-spacing:0.747px;left:1061.40px;">15.00</div>
<div style="position:absolute;top:690.03px;font-size:16.5px;line-height:16.5px;color:#000;white-space:pre;left:1125.50px;">$</div>
<div style="position:absolute;top:690.03px;font-size:16.5px;line-height:16.5px;color:#000;white-space:pre;letter-spacing:0.672px;left:1160.00px;">14,610.00</div>
<div style="position:absolute;top:690.03px;font-size:16.5px;line-height:16.5px;color:#000;white-space:pre;left:1258.50px;">$</div>
<div style="position:absolute;top:690.03px;font-size:16.5px;line-height:16.5px;color:#000;white-space:pre;left:1331.00px;">-</div>
<div style="position:absolute;top:690.03px;font-size:16.5px;line-height:16.5px;color:#000;white-space:pre;left:1375.30px;">$</div>
<div style="position:absolute;top:690.03px;font-size:16.5px;line-height:16.5px;color:#000;white-space:pre;letter-spacing:0.672px;left:1442.80px;">14,610.00</div>
<div style="position:absolute;top:690.03px;font-size:16.5px;line-height:16.5px;color:#000;white-space:pre;left:1541.30px;">$</div>
<div style="position:absolute;top:690.03px;font-size:16.5px;line-height:16.5px;color:#000;white-space:pre;letter-spacing:0.564px;left:1561.50px;">9,740.00</div>
<div style="position:absolute;top:690.03px;font-size:16.5px;line-height:16.5px;color:#000;white-space:pre;left:1649.50px;">$</div>
<div style="position:absolute;top:690.03px;font-size:16.5px;line-height:16.5px;color:#000;white-space:pre;letter-spacing:0.564px;left:1734.50px;">4,870.00</div>
<div style="position:absolute;top:690.03px;font-size:16.5px;line-height:16.5px;color:#000;white-space:pre;letter-spacing:0.356px;left:1825.00px;">01-02-2014</div>
<div style="position:absolute;top:715.03px;font-size:16.5px;line-height:16.5px;color:#000;white-space:pre;letter-spacing:0.226px;left:40.40px;">Channel Partners</div>
<div style="position:absolute;top:715.03px;font-size:16.5px;line-height:16.5px;color:#000;white-space:pre;letter-spacing:-0.518px;left:193.00px;">Canada</div>
<div style="position:absolute;top:715.03px;font-size:16.5px;line-height:16.5px;color:#000;white-space:pre;letter-spacing:-0.290px;left:446.50px;">Paseo</div>
<div style="position:absolute;top:715.03px;font-size:16.5px;line-height:16.5px;color:#000;white-space:pre;letter-spacing:0.688px;left:578.80px;">None</div>
<div style="position:absolute;top:715.03px;font-size:16.5px;line-height:16.5px;color:#000;white-space:pre;letter-spacing:0.290px;left:823.40px;">2518</div>
<div style="position:absolute;top:715.03px;font-size:16.5px;line-height:16.5px;color:#000;white-space:pre;left:875.80px;">$</div>
<div style="position:absolute;top:715.03px;font-size:16.5px;line-height:16.5px;color:#000;white-space:pre;letter-spacing:0.747px;left:944.50px;">10.00</div>
<div style="position:absolute;top:715.03px;font-size:16.5px;line-height:16.5px;color:#000;white-space:pre;left:1008.30px;">$</div>
<div style="position:absolute;top:715.03px;font-size:16.5px;line-height:16.5px;color:#000;white-space:pre;letter-spacing:0.747px;left:1061.40px;">12.00</div>
<div style="position:absolute;top:715.03px;font-size:16.5px;line-height:16.5px;color:#000;white-space:pre;left:1125.50px;">$</div>
<div style="position:absolute;top:715.03px;font-size:16.5px;line-height:16.5px;color:#000;white-space:pre;letter-spacing:0.547px;left:1161.00px;">30,216.00</div>
<div style="position:absolute;top:715.03px;font-size:16.5px;line-height:16.5px;color:#000;white-space:pre;left:1258.50px;">$</div>
<div style="position:absolute;top:715.03px;font-size:16.5px;line-height:16.5px;color:#000;white-space:pre;left:1331.00px;">-</div>
<div style="position:absolute;top:715.03px;font-size:16.5px;line-height:16.5px;color:#000;white-space:pre;left:1375.30px;">$</div>
<div style="position:absolute;top:715.03px;font-size:16.5px;line-height:16.5px;color:#000;white-space:pre;letter-spacing:0.547px;left:1443.80px;">30,216.00</div>
<div style="position:absolute;top:715.03px;font-size:16.5px;line-height:16.5px;color:#000;white-space:pre;left:1541.30px;">$</div>
<div style="position:absolute;top:715.03px;font-size:16.5px;line-height:16.5px;color:#000;white-space:pre;letter-spacing:0.564px;left:1561.50px;">7,554.00</div>
<div style="position:absolute;top:715.03px;font-size:16.5px;line-height:16.5px;color:#000;white-space:pre;left:1649.50px;">$</div>
<div style="position:absolute;top:715.03px;font-size:16.5px;line-height:16.5px;color:#000;white-space:pre;letter-spacing:0.547px;left:1724.90px;">22,662.00</div>
<div style="position:absolute;top:715.03px;font-size:16.5px;line-height:16.5px;color:#000;white-space:pre;letter-spacing:0.356px;left:1825.00px;">01-06-2014</div>
<div style="position:absolute;top:740.03px;font-size:16.5px;line-height:16.5px;color:#000;white-space:pre;letter-spacing:0.577px;left:40.40px;">Government</div>
<div style="position:absolute;top:740.03px;font-size:16.5px;line-height:16.5px;color:#000;white-space:pre;letter-spacing:0.172px;left:193.00px;">Germany</div>
<div style="position:absolute;top:740.03px;font-size:16.5px;line-height:16.5px;color:#000;white-space:pre;letter-spacing:-0.290px;left:446.50px;">Paseo</div>
<div style="position:absolute;top:740.03px;font-size:16.5px;line-height:16.5px;color:#000;white-space:pre;letter-spacing:0.688px;left:578.80px;">None</div>
<div style="position:absolute;top:740.03px;font-size:16.5px;line-height:16.5px;color:#000;white-space:pre;letter-spacing:0.623px;left:822.40px;">1006</div>
<div style="position:absolute;top:740.03px;font-size:16.5px;line-height:16.5px;color:#000;white-space:pre;left:875.80px;">$</div>
<div style="position:absolute;top:740.03px;font-size:16.5px;line-height:16.5px;color:#000;white-space:pre;letter-spacing:0.747px;left:944.50px;">10.00</div>
<div style="position:absolute;top:740.03px;font-size:16.5px;line-height:16.5px;color:#000;white-space:pre;left:1008.30px;">$</div>
<div style="position:absolute;top:740.03px;font-size:16.5px;line-height:16.5px;color:#000;white-space:pre;letter-spacing:0.482px;left:1052.80px;">350.00</div>
<div style="position:absolute;top:740.03px;font-size:16.5px;line-height:16.5px;color:#000;white-space:pre;left:1125.50px;">$</div>
<div style="position:absolute;top:740.03px;font-size:16.5px;line-height:16.5px;color:#000;white-space:pre;letter-spacing:0.591px;left:1145.70px;">3,52,100.00</div>
<div style="position:absolute;top:740.03px;font-size:16.5px;line-height:16.5px;color:#000;white-space:pre;left:1258.50px;">$</div>
<div style="position:absolute;top:740.03px;font-size:16.5px;line-height:16.5px;color:#000;white-space:pre;left:1331.00px;">-</div>
<div style="position:absolute;top:740.03px;font-size:16.5px;line-height:16.5px;color:#000;white-space:pre;left:1375.30px;">$</div>
<div style="position:absolute;top:740.03px;font-size:16.5px;line-height:16.5px;color:#000;white-space:pre;letter-spacing:0.591px;left:1428.50px;">3,52,100.00</div>
<svg style="left:0;top:0" width="1700" height="945"><path d="M1548.40 742.20L1547.20 753.90M1552.30 742.20L1550.90 753.90M1545.90 745.40h7.85M1545.20 750.40h7.6M1557.46 742.20L1556.26 753.90M1561.36 742.20L1559.96 753.90M1554.96 745.40h7.85M1554.26 750.40h7.6M1566.52 742.20L1565.32 753.90M1570.42 742.20L1569.02 753.90M1564.02 745.40h7.85M1563.32 750.40h7.6M1575.58 742.20L1574.38 753.90M1579.48 742.20L1578.08 753.90M1573.08 745.40h7.85M1572.38 750.40h7.6M1584.64 742.20L1583.44 753.90M1588.54 742.20L1587.14 753.90M1582.14 745.40h7.85M1581.44 750.40h7.6M1593.70 742.20L1592.50 753.90M1597.60 742.20L1596.20 753.90M1591.20 745.40h7.85M1590.50 750.40h7.6M1602.76 742.20L1601.56 753.90M1606.66 742.20L1605.26 753.90M1600.26 745.40h7.85M1599.56 750.40h7.6M1611.82 742.20L1610.62 753.90M1615.72 742.20L1614.32 753.90M1609.32 745.40h7.85M1608.62 750.40h7.6M1620.88 742.20L1619.68 753.90M1624.78 742.20L1623.38 753.90M1618.38 745.40h7.85M1617.68 750.40h7.6M1629.94 742.20L1628.74 753.90M1633.84 742.20L1632.44 753.90M1627.44 745.40h7.85M1626.74 750.40h7.6" stroke="#111" stroke-width="1.35" fill="none"/></svg>
<div style="position:absolute;top:740.03px;font-size:16.5px;line-height:16.5px;color:#000;white-space:pre;left:1649.50px;">$</div>
<div style="position:absolute;top:740.03px;font-size:16.5px;line-height:16.5px;color:#000;white-space:pre;letter-spacing:0.547px;left:1724.90px;">90,540.00</div>
<div style="position:absolute;top:740.03px;font-size:16.5px;line-height:16.5px;color:#000;white-space:pre;letter-spacing:0.356px;left:1825.00px;">01-06-2014</div>
<div style="position:absolute;top:765.03px;font-size:16.5px;line-height:16.5px;color:#000;white-space:pre;letter-spacing:0.226px;left:40.40px;">Channel Partners</div>
<div style="position:absolute;top:765.03px;font-size:16.5px;line-height:16.5px;color:#000;white-space:pre;letter-spacing:0.172px;left:193.00px;">Germany</div>
<div style="position:absolute;top:765.03px;font-size:16.5px;line-height:16.5px;color:#000;white-space:pre;letter-spacing:-0.290px;left:446.50px;">Paseo</div>
<div style="position:absolute;top:765.03px;font-size:16.5px;line-height:16.5px;color:#000;white-space:pre;letter-spacing:0.688px;left:578.80px;">None</div>
<div style="position:absolute;top:765.03px;font-size:16.5px;line-height:16.5px;color:#000;white-space:pre;letter-spacing:0.223px;left:833.00px;">367</div>
<div style="position:absolute;top:765.03px;font-size:16.5px;line-height:16.5px;color:#000;white-space:pre;left:875.80px;">$</div>
<div style="position:absolute;top:765.03px;font-size:16.5px;line-height:16.5px;color:#000;white-space:pre;letter-spacing:0.747px;left:944.50px;">10.00</div>
<div style="position:absolute;top:765.03px;font-size:16.5px;line-height:16.5px;color:#000;white-space:pre;left:1008.30px;">$</div>
<div style="position:absolute;top:765.03px;font-size:16.5px;line-height:16.5px;color:#000;white-space:pre;letter-spacing:0.747px;left:1061.40px;">12.00</div>
<div style="position:absolute;top:765.03px;font-size:16.5px;line-height:16.5px;color:#000;white-space:pre;left:1125.50px;">$</div>
<div style="position:absolute;top:765.03px;font-size:16.5px;line-height:16.5px;color:#000;white-space:pre;letter-spacing:0.564px;left:1170.60px;">4,404.00</div>
<div style="position:absolute;top:765.03px;font-size:16.5px;line-height:16.5px;color:#000;white-space:pre;left:1258.50px;">$</div>
<div style="position:absolute;top:765.03px;font-size:16.5px;line-height:16.5px;color:#000;white-space:pre;left:1331.00px;">-</div>
<div style="position:absolute;top:765.03px;font-size:16.5px;line-height:16.5px;color:#000;white-space:pre;left:1375.30px;">$</div>
<div style="position:absolute;top:765.03px;font-size:16.5px;line-height:16.5px;color:#000;white-space:pre;letter-spacing:0.564px;left:1453.40px;">4,404.00</div>
<div style="position:absolute;top:765.03px;font-size:16.5px;line-height:16.5px;color:#000;white-space:pre;left:1541.30px;">$</div>
<div style="position:absolute;top:765.03px;font-size:16.5px;line-height:16.5px;color:#000;white-space:pre;letter-spacing:0.707px;left:1560.50px;">1,101.00</div>
<div style="position:absolute;top:765.03px;font-size:16.5px;line-height:16.5px;color:#000;white-space:pre;left:1649.50px;">$</div>
<div style="position:absolute;top:765.03px;font-size:16.5px;line-height:16.5px;color:#000;white-space:pre;letter-spacing:0.564px;left:1734.50px;">3,303.00</div>
<div style="position:absolute;top:765.03px;font-size:16.5px;line-height:16.5px;color:#000;white-space:pre;letter-spacing:0.356px;left:1825.00px;">01-07-2014</div>
<div style="position:absolute;top:790.03px;font-size:16.5px;line-height:16.5px;color:#000;white-space:pre;letter-spacing:0.577px;left:40.40px;">Government</div>
<div style="position:absolute;top:790.03px;font-size:16.5px;line-height:16.5px;color:#000;white-space:pre;letter-spacing:0.783px;left:192.00px;">Mexico</div>
<div style="position:absolute;top:790.03px;font-size:16.5px;line-height:16.5px;color:#000;white-space:pre;letter-spacing:-0.290px;left:446.50px;">Paseo</div>
<div style="position:absolute;top:790.03px;font-size:16.5px;line-height:16.5px;color:#000;white-space:pre;letter-spacing:0.688px;left:578.80px;">None</div>
<div style="position:absolute;top:790.03px;font-size:16.5px;line-height:16.5px;color:#000;white-space:pre;letter-spacing:0.223px;left:833.00px;">883</div>
<div style="position:absolute;top:790.03px;font-size:16.5px;line-height:16.5px;color:#000;white-space:pre;left:875.80px;">$</div>
<div style="position:absolute;top:790.03px;font-size:16.5px;line-height:16.5px;color:#000;white-space:pre;letter-spacing:0.747px;left:944.50px;">10.00</div>
<div style="position:absolute;top:790.03px;font-size:16.5px;line-height:16.5px;color:#000;white-space:pre;left:1008.30px;">$</div>
<div style="position:absolute;top:790.03px;font-size:16.5px;line-height:16.5px;color:#000;white-space:pre;letter-spacing:0.521px;left:1072.00px;">7.00</div>
<div style="position:absolute;top:790.03px;font-size:16.5px;line-height:16.5px;color:#000;white-space:pre;left:1125.50px;">$</div>
<div style="position:absolute;top:790.03px;font-size:16.5px;line-height:16.5px;color:#000;white-space:pre;letter-spacing:0.564px;left:1170.60px;">6,181.00</div>
<div style="position:absolute;top:790.03px;font-size:16.5px;line-height:16.5px;color:#000;white-space:pre;left:1258.50px;">$</div>
<div style="position:absolute;top:790.03px;font-size:16.5px;line-height:16.5px;color:#000;white-space:pre;left:1331.00px;">-</div>
<div style="position:absolute;top:790.03px;font-size:16.5px;line-height:16.5px;color:#000;white-space:pre;left:1375.30px;">$</div>
<div style="position:absolute;top:790.03px;font-size:16.5px;line-height:16.5px;color:#000;white-space:pre;letter-spacing:0.564px;left:1453.40px;">6,181.00</div>
<div style="position:absolute;top:790.03px;font-size:16.5px;line-height:16.5px;color:#000;white-space:pre;left:1541.30px;">$</div>
<div style="position:absolute;top:790.03px;font-size:16.5px;line-height:16.5px;color:#000;white-space:pre;letter-spacing:0.564px;left:1561.50px;">4,415.00</div>
<div style="position:absolute;top:790.03px;font-size:16.5px;line-height:16.5px;color:#000;white-space:pre;left:1649.50px;">$</div>
<div style="position:absolute;top:790.03px;font-size:16.5px;line-height:16.5px;color:#000;white-space:pre;letter-spacing:0.707px;left:1733.50px;">1,766.00</div>
<div style="position:absolute;top:790.03px;font-size:16.5px;line-height:16.5px;color:#000;white-space:pre;letter-spacing:0.356px;left:1825.00px;">01-08-2014</div>
<div style="position:absolute;top:815.03px;font-size:16.5px;line-height:16.5px;color:#000;white-space:pre;letter-spacing:1.034px;left:39.40px;">Midmarket</div>
<div style="position:absolute;top:815.03px;font-size:16.5px;line-height:16.5px;color:#000;white-space:pre;letter-spacing:0.077px;left:192.00px;">France</div>
<div style="position:absolute;top:815.03px;font-size:16.5px;line-height:16.5px;color:#000;white-space:pre;letter-spacing:-0.290px;left:446.50px;">Paseo</div>
<div style="position:absolute;top:815.03px;font-size:16.5px;line-height:16.5px;color:#000;white-space:pre;letter-spacing:0.688px;left:578.80px;">None</div>
<div style="position:absolute;top:815.03px;font-size:16.5px;line-height:16.5px;color:#000;white-space:pre;letter-spacing:0.223px;left:833.00px;">549</div>
<div style="position:absolute;top:815.03px;font-size:16.5px;line-height:16.5px;color:#000;white-space:pre;left:875.80px;">$</div>
<div style="position:absolute;top:815.03px;font-size:16.5px;line-height:16.5px;color:#000;white-space:pre;letter-spacing:0.747px;left:944.50px;">10.00</div>
<div style="position:absolute;top:815.03px;font-size:16.5px;line-height:16.5px;color:#000;white-space:pre;left:1008.30px;">$</div>
<div style="position:absolute;top:815.03px;font-size:16.5px;line-height:16.5px;color:#000;white-space:pre;letter-spacing:0.747px;left:1061.40px;">15.00</div>
<div style="position:absolute;top:815.03px;font-size:16.5px;line-height:16.5px;color:#000;white-space:pre;left:1125.50px;">$</div>
<div style="position:absolute;top:815.03px;font-size:16.5px;line-height:16.5px;color:#000;white-space:pre;letter-spacing:0.564px;left:1170.60px;">8,235.00</div>
<div style="position:absolute;top:815.03px;font-size:16.5px;line-height:16.5px;color:#000;white-space:pre;left:1258.50px;">$</div>
<div style="position:absolute;top:815.03px;font-size:16.5px;line-height:16.5px;color:#000;white-space:pre;left:1331.00px;">-</div>
<div style="position:absolute;top:815.03px;font-size:16.5px;line-height:16.5px;color:#000;white-space:pre;left:1375.30px;">$</div>
<div style="position:absolute;top:815.03px;font-size:16.5px;line-height:16.5px;color:#000;white-space:pre;letter-spacing:0.564px;left:1453.40px;">8,235.00</div>
<div style="position:absolute;top:815.03px;font-size:16.5px;line-height:16.5px;color:#000;white-space:pre;left:1541.30px;">$</div>
<div style="position:absolute;top:815.03px;font-size:16.5px;line-height:16.5px;color:#000;white-space:pre;letter-spacing:0.564px;left:1561.50px;">5,490.00</div>
<div style="position:absolute;top:815.03px;font-size:16.5px;line-height:16.5px;color:#000;white-space:pre;left:1649.50px;">$</div>
<div style="position:absolute;top:815.03px;font-size:16.5px;line-height:16.5px;color:#000;white-space:pre;letter-spacing:0.564px;left:1734.50px;">2,745.00</div>
<div style="position:absolute;top:815.03px;font-size:16.5px;line-height:16.5px;color:#000;white-space:pre;letter-spacing:0.356px;left:1825.00px;">01-09-2013</div>
<div style="position:absolute;top:840.03px;font-size:16.5px;line-height:16.5px;color:#000;white-space:pre;letter-spacing:-0.100px;left:40.40px;">Small Business</div>
<div style="position:absolute;top:840.03px;font-size:16.5px;line-height:16.5px;color:#000;white-space:pre;letter-spacing:0.783px;left:192.00px;">Mexico</div>
<div style="position:absolute;top:840.03px;font-size:16.5px;line-height:16.5px;color:#000;white-space:pre;letter-spacing:-0.290px;left:446.50px;">Paseo</div>
<div style="position:absolute;top:840.03px;font-size:16.5px;line-height:16.5px;color:#000;white-space:pre;letter-spacing:0.688px;left:578.80px;">None</div>
<div style="position:absolute;top:840.03px;font-size:16.5px;line-height:16.5px;color:#000;white-space:pre;letter-spacing:0.223px;left:833.00px;">788</div>
<div style="position:absolute;top:840.03px;font-size:16.5px;line-height:16.5px;color:#000;white-space:pre;left:875.80px;">$</div>
<div style="position:absolute;top:840.03px;font-size:16.5px;line-height:16.5px;color:#000;white-space:pre;letter-spacing:0.747px;left:944.50px;">10.00</div>
<div style="position:absolute;top:840.03px;font-size:16.5px;line-height:16.5px;color:#000;white-space:pre;left:1008.30px;">$</div>
<div style="position:absolute;top:840.03px;font-size:16.5px;line-height:16.5px;color:#000;white-space:pre;letter-spacing:0.482px;left:1052.80px;">300.00</div>
<div style="position:absolute;top:840.03px;font-size:16.5px;line-height:16.5px;color:#000;white-space:pre;left:1125.50px;">$</div>
<div style="position:absolute;top:840.03px;font-size:16.5px;line-height:16.5px;color:#000;white-space:pre;letter-spacing:0.591px;left:1145.70px;">2,36,400.00</div>
<div style="position:absolute;top:840.03px;font-size:16.5px;line-height:16.5px;color:#000;white-space:pre;left:1258.50px;">$</div>
<div style="position:absolute;top:840.03px;font-size:16.5px;line-height:16.5px;color:#000;white-space:pre;left:1331.00px;">-</div>
<div style="position:absolute;top:840.03px;font-size:16.5px;line-height:16.5px;color:#000;white-space:pre;left:1375.30px;">$</div>
<div style="position:absolute;top:840.03px;font-size:16.5px;line-height:16.5px;color:#000;white-space:pre;letter-spacing:0.591px;left:1428.50px;">2,36,400.00</div>
<svg style="left:0;top:0" width="1700" height="945"><path d="M1548.40 842.20L1547.20 853.90M1552.30 842.20L1550.90 853.90M1545.90 845.40h7.85M1545.20 850.40h7.6M1557.46 842.20L1556.26 853.90M1561.36 842.20L1559.96 853.90M1554.96 845.40h7.85M1554.26 850.40h7.6M1566.52 842.20L1565.32 853.90M1570.42 842.20L1569.02 853.90M1564.02 845.40h7.85M1563.32 850.40h7.6M1575.58 842.20L1574.38 853.90M1579.48 842.20L1578.08 853.90M1573.08 845.40h7.85M1572.38 850.40h7.6M1584.64 842.20L1583.44 853.90M1588.54 842.20L1587.14 853.90M1582.14 845.40h7.85M1581.44 850.40h7.6M1593.70 842.20L1592.50 853.90M1597.60 842.20L1596.20 853.90M1591.20 845.40h7.85M1590.50 850.40h7.6M1602.76 842.20L1601.56 853.90M1606.66 842.20L1605.26 853.90M1600.26 845.40h7.85M1599.56 850.40h7.6M1611.82 842.20L1610.62 853.90M1615.72 842.20L1614.32 853.90M1609.32 845.40h7.85M1608.62 850.40h7.6M1620.88 842.20L1619.68 853.90M1624.78 842.20L1623.38 853.90M1618.38 845.40h7.85M1617.68 850.40h7.6M1629.94 842.20L1628.74 853.90M1633.84 842.20L1632.44 853.90M1627.44 845.40h7.85M1626.74 850.40h7.6" stroke="#111" stroke-width="1.35" fill="none"/></svg>
<div style="position:absolute;top:840.03px;font-size:16.5px;line-height:16.5px;color:#000;white-space:pre;left:1649.50px;">$</div>
<div style="position:absolute;top:840.03px;font-size:16.5px;line-height:16.5px;color:#000;white-space:pre;letter-spacing:0.547px;left:1724.90px;">39,400.00</div>
<div style="position:absolute;top:840.03px;font-size:16.5px;line-height:16.5px;color:#000;white-space:pre;letter-spacing:0.356px;left:1825.00px;">01-09-2013</div>
<div style="position:absolute;top:865.03px;font-size:16.5px;line-height:16.5px;color:#000;white-space:pre;letter-spacing:1.034px;left:39.40px;">Midmarket</div>
<div style="position:absolute;top:865.03px;font-size:16.5px;line-height:16.5px;color:#000;white-space:pre;letter-spacing:0.783px;left:192.00px;">Mexico</div>
<div style="position:absolute;top:865.03px;font-size:16.5px;line-height:16.5px;color:#000;white-space:pre;letter-spacing:-0.290px;left:446.50px;">Paseo</div>
<div style="position:absolute;top:865.03px;font-size:16.5px;line-height:16.5px;color:#000;white-space:pre;letter-spacing:0.688px;left:578.80px;">None</div>
<div style="position:absolute;top:865.03px;font-size:16.5px;line-height:16.5px;color:#000;white-space:pre;letter-spacing:0.290px;left:823.40px;">2472</div>
<div style="position:absolute;top:865.03px;font-size:16.5px;line-height:16.5px;color:#000;white-space:pre;left:875.80px;">$</div>
<div style="position:absolute;top:865.03px;font-size:16.5px;line-height:16.5px;color:#000;white-space:pre;letter-spacing:0.747px;left:944.50px;">10.00</div>
<div style="position:absolute;top:865.03px;font-size:16.5px;line-height:16.5px;color:#000;white-space:pre;left:1008.30px;">$</div>
<div style="position:absolute;top:865.03px;font-size:16.5px;line-height:16.5px;color:#000;white-space:pre;letter-spacing:0.747px;left:1061.40px;">15.00</div>
<div style="position:absolute;top:865.03px;font-size:16.5px;line-height:16.5px;color:#000;white-space:pre;left:1125.50px;">$</div>
<div style="position:absolute;top:865.03px;font-size:16.5px;line-height:16.5px;color:#000;white-space:pre;letter-spacing:0.547px;left:1161.00px;">37,080.00</div>
<div style="position:absolute;top:865.03px;font-size:16.5px;line-height:16.5px;color:#000;white-space:pre;left:1258.50px;">$</div>
<div style="position:absolute;top:865.03px;font-size:16.5px;line-height:16.5px;color:#000;white-space:pre;left:1331.00px;">-</div>
<div style="position:absolute;top:865.03px;font-size:16.5px;line-height:16.5px;color:#000;white-space:pre;left:1375.30px;">$</div>
<div style="position:absolute;top:865.03px;font-size:16.5px;line-height:16.5px;color:#000;white-space:pre;letter-spacing:0.547px;left:1443.80px;">37,080.00</div>
<svg style="left:0;top:0" width="1700" height="945"><path d="M1548.40 867.20L1547.20 878.90M1552.30 867.20L1550.90 878.90M1545.90 870.40h7.85M1545.20 875.40h7.6M1557.46 867.20L1556.26 878.90M1561.36 867.20L1559.96 878.90M1554.96 870.40h7.85M1554.26 875.40h7.6M1566.52 867.20L1565.32 878.90M1570.42 867.20L1569.02 878.90M1564.02 870.40h7.85M1563.32 875.40h7.6M1575.58 867.20L1574.38 878.90M1579.48 867.20L1578.08 878.90M1573.08 870.40h7.85M1572.38 875.40h7.6M1584.64 867.20L1583.44 878.90M1588.54 867.20L1587.14 878.90M1582.14 870.40h7.85M1581.44 875.40h7.6M1593.70 867.20L1592.50 878.90M1597.60 867.20L1596.20 878.90M1591.20 870.40h7.85M1590.50 875.40h7.6M1602.76 867.20L1601.56 878.90M1606.66 867.20L1605.26 878.90M1600.26 870.40h7.85M1599.56 875.40h7.6M1611.82 867.20L1610.62 878.90M1615.72 867.20L1614.32 878.90M1609.32 870.40h7.85M1608.62 875.40h7.6M1620.88 867.20L1619.68 878.90M1624.78 867.20L1623.38 878.90M1618.38 870.40h7.85M1617.68 875.40h7.6M1629.94 867.20L1628.74 878.90M1633.84 867.20L1632.44 878.90M1627.44 870.40h7.85M1626.74 875.40h7.6" stroke="#111" stroke-width="1.35" fill="none"/></svg>
<div style="position:absolute;top:865.03px;font-size:16.5px;line-height:16.5px;color:#000;white-space:pre;left:1649.50px;">$</div>
<div style="position:absolute;top:865.03px;font-size:16.5px;line-height:16.5px;color:#000;white-space:pre;letter-spacing:0.672px;left:1723.90px;">12,360.00</div>
<div style="position:absolute;top:865.03px;font-size:16.5px;line-height:16.5px;color:#000;white-space:pre;letter-spacing:0.356px;left:1825.00px;">01-09-2014</div>
<div style="position:absolute;top:890.03px;font-size:16.5px;line-height:16.5px;color:#000;white-space:pre;letter-spacing:0.577px;left:40.40px;">Government</div>
<div style="position:absolute;top:890.03px;font-size:16.5px;line-height:16.5px;color:#000;white-space:pre;letter-spacing:0.389px;left:192.00px;">United States of America</div>
<div style="position:absolute;top:890.03px;font-size:16.5px;line-height:16.5px;color:#000;white-space:pre;letter-spacing:-0.290px;left:446.50px;">Paseo</div>
<div style="position:absolute;top:890.03px;font-size:16.5px;line-height:16.5px;color:#000;white-space:pre;letter-spacing:0.688px;left:578.80px;">None</div>
<div style="position:absolute;top:890.03px;font-size:16.5px;line-height:16.5px;color:#000;white-space:pre;letter-spacing:1.032px;left:822.40px;">1143</div>
<div style="position:absolute;top:890.03px;font-size:16.5px;line-height:16.5px;color:#000;white-space:pre;left:875.80px;">$</div>
<div style="position:absolute;top:890.03px;font-size:16.5px;line-height:16.5px;color:#000;white-space:pre;letter-spacing:0.747px;left:944.50px;">10.00</div>
<div style="position:absolute;top:890.03px;font-size:16.5px;line-height:16.5px;color:#000;white-space:pre;left:1008.30px;">$</div>
<div style="position:absolute;top:890.03px;font-size:16.5px;line-height:16.5px;color:#000;white-space:pre;letter-spacing:0.521px;left:1072.00px;">7.00</div>
<div style="position:absolute;top:890.03px;font-size:16.5px;line-height:16.5px;color:#000;white-space:pre;left:1125.50px;">$</div>
<div style="position:absolute;top:890.03px;font-size:16.5px;line-height:16.5px;color:#000;white-space:pre;letter-spacing:0.564px;left:1170.60px;">8,001.00</div>
<div style="position:absolute;top:890.03px;font-size:16.5px;line-height:16.5px;color:#000;white-space:pre;left:1258.50px;">$</div>
<div style="position:absolute;top:890.03px;font-size:16.5px;line-height:16.5px;color:#000;white-space:pre;left:1331.00px;">-</div>
<div style="position:absolute;top:890.03px;font-size:16.5px;line-height:16.5px;color:#000;white-space:pre;left:1375.30px;">$</div>
<div style="position:absolute;top:890.03px;font-size:16.5px;line-height:16.5px;color:#000;white-space:pre;letter-spacing:0.564px;left:1453.40px;">8,001.00</div>
<div style="position:absolute;top:890.03px;font-size:16.5px;line-height:16.5px;color:#000;white-space:pre;left:1541.30px;">$</div>
<div style="position:absolute;top:890.03px;font-size:16.5px;line-height:16.5px;color:#000;white-space:pre;letter-spacing:0.564px;left:1561.50px;">5,715.00</div>
<div style="position:absolute;top:890.03px;font-size:16.5px;line-height:16.5px;color:#000;white-space:pre;left:1649.50px;">$</div>
<div style="position:absolute;top:890.03px;font-size:16.5px;line-height:16.5px;color:#000;white-space:pre;letter-spacing:0.564px;left:1734.50px;">2,286.00</div>
<div style="position:absolute;top:890.03px;font-size:16.5px;line-height:16.5px;color:#000;white-space:pre;letter-spacing:0.356px;left:1825.00px;">01-10-2013</div>
<div style="position:absolute;top:915.03px;font-size:16.5px;line-height:16.5px;color:#000;white-space:pre;letter-spacing:0.577px;left:40.40px;">Government</div>
<div style="position:absolute;top:915.03px;font-size:16.5px;line-height:16.5px;color:#000;white-space:pre;letter-spacing:-0.518px;left:193.00px;">Canada</div>
<div style="position:absolute;top:915.03px;font-size:16.5px;line-height:16.5px;color:#000;white-space:pre;letter-spacing:-0.290px;left:446.50px;">Paseo</div>
<div style="position:absolute;top:915.03px;font-size:16.5px;line-height:16.5px;color:#000;white-space:pre;letter-spacing:0.688px;left:578.80px;">None</div>
<div style="position:absolute;top:915.03px;font-size:16.5px;line-height:16.5px;color:#000;white-space:pre;letter-spacing:0.623px;left:822.40px;">1725</div>
<div style="position:absolute;top:915.03px;font-size:16.5px;line-height:16.5px;color:#000;white-space:pre;left:875.80px;">$</div>
<div style="position:absolute;top:915.03px;font-size:16.5px;line-height:16.5px;color:#000;white-space:pre;letter-spacing:0.747px;left:944.50px;">10.00</div>
<div style="position:absolute;top:915.03px;font-size:16.5px;line-height:16.5px;color:#000;white-space:pre;left:1008.30px;">$</div>
<div style="position:absolute;top:915.03px;font-size:16.5px;line-height:16.5px;color:#000;white-space:pre;letter-spacing:0.482px;left:1052.80px;">350.00</div>
<div style="position:absolute;top:915.03px;font-size:16.5px;line-height:16.5px;color:#000;white-space:pre;left:1125.50px;">$</div>
<div style="position:absolute;top:915.03px;font-size:16.5px;line-height:16.5px;color:#000;white-space:pre;letter-spacing:0.591px;left:1145.70px;">6,03,750.00</div>
<div style="position:absolute;top:915.03px;font-size:16.5px;line-height:16.5px;color:#000;white-space:pre;left:1258.50px;">$</div>
<div style="position:absolute;top:915.03px;font-size:16.5px;line-height:16.5px;color:#000;white-space:pre;left:1331.00px;">-</div>
<div style="position:absolute;top:915.03px;font-size:16.5px;line-height:16.5px;color:#000;white-space:pre;left:1375.30px;">$</div>
<div style="position:absolute;top:915.03px;font-size:16.5px;line-height:16.5px;color:#000;white-space:pre;letter-spacing:0.591px;left:1428.50px;">6,03,750.00</div>
<svg style="left:0;top:0" width="1700" height="945"><path d="M1548.40 917.20L1547.20 928.90M1552.30 917.20L1550.90 928.90M1545.90 920.40h7.85M1545.20 925.40h7.6M1557.46 917.20L1556.26 928.90M1561.36 917.20L1559.96 928.90M1554.96 920.40h7.85M1554.26 925.40h7.6M1566.52 917.20L1565.32 928.90M1570.42 917.20L1569.02 928.90M1564.02 920.40h7.85M1563.32 925.40h7.6M1575.58 917.20L1574.38 928.90M1579.48 917.20L1578.08 928.90M1573.08 920.40h7.85M1572.38 925.40h7.6M1584.64 917.20L1583.44 928.90M1588.54 917.20L1587.14 928.90M1582.14 920.40h7.85M1581.44 925.40h7.6M1593.70 917.20L1592.50 928.90M1597.60 917.20L1596.20 928.90M1591.20 920.40h7.85M1590.50 925.40h7.6M1602.76 917.20L1601.56 928.90M1606.66 917.20L1605.26 928.90M1600.26 920.40h7.85M1599.56 925.40h7.6M1611.82 917.20L1610.62 928.90M1615.72 917.20L1614.32 928.90M1609.32 920.40h7.85M1608.62 925.40h7.6M1620.88 917.20L1619.68 928.90M1624.78 917.20L1623.38 928.90M1618.38 920.40h7.85M1617.68 925.40h7.6M1629.94 917.20L1628.74 928.90M1633.84 917.20L1632.44 928.90M1627.44 920.40h7.85M1626.74 925.40h7.6" stroke="#111" stroke-width="1.35" fill="none"/></svg>
<div style="position:absolute;top:915.03px;font-size:16.5px;line-height:16.5px;color:#000;white-space:pre;left:1649.50px;">$</div>
<div style="position:absolute;top:915.03px;font-size:16.5px;line-height:16.5px;color:#000;white-space:pre;letter-spacing:0.691px;left:1708.60px;">1,55,250.00</div>
<div style="position:absolute;top:915.03px;font-size:16.5px;line-height:16.5px;color:#000;white-space:pre;letter-spacing:0.492px;left:1825.00px;">01-11-2013</div>
<div style="position:absolute;top:940.03px;font-size:16.5px;line-height:16.5px;color:#000;white-space:pre;letter-spacing:0.577px;left:40.40px;">Government</div>
<div style="position:absolute;top:940.03px;font-size:16.5px;line-height:16.5px;color:#000;white-space:pre;letter-spacing:0.077px;left:192.00px;">France</div>
<div style="position:absolute;top:940.03px;font-size:16.5px;line-height:16.5px;color:#000;white-space:pre;letter-spacing:-0.290px;left:446.50px;">Paseo</div>
<div style="position:absolute;top:940.03px;font-size:16.5px;line-height:16.5px;color:#000;white-space:pre;letter-spacing:0.688px;left:578.80px;">None</div>
<div style="position:absolute;top:940.03px;font-size:16.5px;line-height:16.5px;color:#000;white-space:pre;letter-spacing:0.623px;left:822.40px;">1006</div>
<div style="position:absolute;top:940.03px;font-size:16.5px;line-height:16.5px;color:#000;white-space:pre;left:875.80px;">$</div>
<div style="position:absolute;top:940.03px;font-size:16.5px;line-height:16.5px;color:#000;white-space:pre;letter-spacing:0.747px;left:944.50px;">10.00</div>
<div style="position:absolute;top:940.03px;font-size:16.5px;line-height:16.5px;color:#000;white-space:pre;left:1008.30px;">$</div>
<div style="position:absolute;top:940.03px;font-size:16.5px;line-height:16.5px;color:#000;white-space:pre;letter-spacing:0.482px;left:1052.80px;">350.00</div>
<div style="position:absolute;top:940.03px;font-size:16.5px;line-height:16.5px;color:#000;white-space:pre;left:1125.50px;">$</div>
<div style="position:absolute;top:940.03px;font-size:16.5px;line-height:16.5px;color:#000;white-space:pre;letter-spacing:0.591px;left:1145.70px;">3,52,100.00</div>
<div style="position:absolute;top:940.03px;font-size:16.5px;line-height:16.5px;color:#000;white-space:pre;left:1258.50px;">$</div>
<div style="position:absolute;top:940.03px;font-size:16.5px;line-height:16.5px;color:#000;white-space:pre;left:1331.00px;">-</div>
<div style="position:absolute;top:940.03px;font-size:16.5px;line-height:16.5px;color:#000;white-space:pre;left:1375.30px;">$</div>
<div style="position:absolute;top:940.03px;font-size:16.5px;line-height:16.5px;color:#000;white-space:pre;letter-spacing:0.591px;left:1428.50px;">3,52,100.00</div>
<svg style="left:0;top:0" width="1700" height="945"><path d="M1548.40 942.20L1547.20 953.90M1552.30 942.20L1550.90 953.90M1545.90 945.40h7.85M1545.20 950.40h7.6M1557.46 942.20L1556.26 953.90M1561.36 942.20L1559.96 953.90M1554.96 945.40h7.85M1554.26 950.40h7.6M1566.52 942.20L1565.32 953.90M1570.42 942.20L1569.02 953.90M1564.02 945.40h7.85M1563.32 950.40h7.6M1575.58 942.20L1574.38 953.90M1579.48 942.20L1578.08 953.90M1573.08 945.40h7.85M1572.38 950.40h7.6M1584.64 942.20L1583.44 953.90M1588.54 942.20L1587.14 953.90M1582.14 945.40h7.85M1581.44 950.40h7.6M1593.70 942.20L1592.50 953.90M1597.60 942.20L1596.20 953.90M1591.20 945.40h7.85M1590.50 950.40h7.6M1602.76 942.20L1601.56 953.90M1606.66 942.20L1605.26 953.90M1600.26 945.40h7.85M1599.56 950.40h7.6M1611.82 942.20L1610.62 953.90M1615.72 942.20L1614.32 953.90M1609.32 945.40h7.85M1608.62 950.40h7.6M1620.88 942.20L1619.68 953.90M1624.78 942.20L1623.38 953.90M1618.38 945.40h7.85M1617.68 950.40h7.6M1629.94 942.20L1628.74 953.90M1633.84 942.20L1632.44 953.90M1627.44 945.40h7.85M1626.74 950.40h7.6" stroke="#111" stroke-width="1.35" fill="none"/></svg>
<div style="position:absolute;top:940.03px;font-size:16.5px;line-height:16.5px;color:#000;white-space:pre;left:1649.50px;">$</div>
<div style="position:absolute;top:940.03px;font-size:16.5px;line-height:16.5px;color:#000;white-space:pre;letter-spacing:0.547px;left:1724.90px;">90,540.00</div>
<div style="position:absolute;top:940.03px;font-size:16.5px;line-height:16.5px;color:#000;white-space:pre;letter-spacing:0.356px;left:1825.00px;">01-06-2014</div>
</div>
<div style="position:absolute;left:35px;top:233px;width:155px;height:2px;background:#217346;"></div>
<div style="position:absolute;left:35px;top:233px;width:2px;height:708px;background:#217346;"></div>
<div style="position:absolute;left:188px;top:233px;width:2px;height:708px;background:#217346;"></div>
<div style="position:absolute;left:1890px;top:200px;width:29px;height:741px;background:#e6e6e6;"></div>
<div style="position:absolute;left:1892px;top:211px;width:25px;height:25px;background:#ffffff;border:1px solid #ababab;"></div>
<div style="position:absolute;left:1892px;top:236px;width:25px;height:26px;background:#ffffff;border:1px solid #ababab;"></div>
<div style="position:absolute;left:1892px;top:262px;width:25px;height:655px;background:#ececec;"></div>
<div style="position:absolute;left:1892px;top:917px;width:25px;height:25px;background:#ffffff;border:1px solid #ababab;"></div>
<svg style="left:0;top:0" width="1922" height="1010"><path d="M1898.5 227h12l-6-6z" fill="#222"/><path d="M1898.5 927h12l-6 6z" fill="#222"/></svg>
<div style="position:absolute;left:0px;top:942px;width:1919px;height:33px;background:#e6e6e6;"></div>
<div style="position:absolute;left:118px;top:941px;width:90px;height:30px;background:#ffffff;"></div>
<div style="position:absolute;left:118px;top:968.5px;width:90px;height:2.5px;background:#217346;"></div>
<div style="position:absolute;left:117px;top:941px;width:1px;height:30px;background:#c8c8c8;"></div>
<div style="position:absolute;left:208px;top:941px;width:1px;height:30px;background:#c8c8c8;"></div>
<div style="position:absolute;top:947.76px;font-size:18px;line-height:18px;color:#217346;white-space:pre;font-weight:bold;letter-spacing:0.917px;left:130.00px;">Sheet1</div>
<div style="position:absolute;top:947.76px;font-size:18px;line-height:18px;color:#444444;white-space:pre;letter-spacing:0.272px;left:221.60px;">Sheet2</div>
<div style="position:absolute;left:295px;top:945px;width:1px;height:25px;background:#b0b0b0;"></div>
<svg style="left:0;top:0" width="1922" height="1010"><path d="M35.5 953v9.5l-6.5-4.75z" fill="#c0c0c0"/><path d="M63.5 953v9.5l6.5-4.75z" fill="#c0c0c0"/><circle cx="346" cy="957.8" r="10.7" fill="none" stroke="#707070" stroke-width="1.4"/><path d="M340 957.8h12M346 951.8v12" stroke="#707070" stroke-width="1.6"/><rect x="1148" y="951" width="2.5" height="2.5" fill="#b4b4b4"/><rect x="1148" y="956" width="2.5" height="2.5" fill="#b4b4b4"/><rect x="1148" y="961" width="2.5" height="2.5" fill="#b4b4b4"/></svg>
<div style="position:absolute;left:1168px;top:945.5px;width:719.5px;height:24.0px;background:#f0f0f0;border:1px solid #ababab;"></div>
<div style="position:absolute;left:1168px;top:945.5px;width:25.5px;height:24.0px;background:#ffffff;border:1px solid #ababab;"></div>
<div style="position:absolute;left:1193px;top:945.5px;width:544px;height:24.0px;background:#ffffff;border:1px solid #ababab;"></div>
<div style="position:absolute;left:1863px;top:945.5px;width:24.5px;height:24.0px;background:#ffffff;border:1px solid #ababab;"></div>
<svg style="left:0;top:0" width="1922" height="1010"><path d="M1177 957.5l6.5-6v12z" fill="#222"/><path d="M1879 957.5l-6.5-6v12z" fill="#222"/></svg>
<div style="position:absolute;left:0px;top:975px;width:1919px;height:33px;background:#f3f3f3;"></div>
<div style="position:absolute;left:0px;top:975px;width:1919px;height:1px;background:#d6d6d6;"></div>
<div style="position:absolute;left:0px;top:1008px;width:1922px;height:2px;background:#b9c1c9;"></div>
<div style="position:absolute;top:985.10px;font-size:15px;line-height:15px;color:#333333;white-space:pre;letter-spacing:-0.022px;left:10.40px;">Select destination and press ENTER or choose Paste</div>
<div style="position:absolute;top:985.10px;font-size:15px;line-height:15px;color:#333333;white-space:pre;letter-spacing:0.284px;left:1373.00px;">Count: 701</div>
<div style="position:absolute;left:1475px;top:976px;width:60px;height:32px;background:#c8c8c8;"></div>
<svg style="left:0;top:0" width="1922" height="1010"><g fill="none" stroke="#666" stroke-width="1.2"><rect x="1495.5" y="982.5" width="18" height="18"/><path d="M1501.5 982.5v18M1507.5 982.5v18M1495.5 988.5h18M1495.5 994.5h18"/><rect x="1555.5" y="982.5" width="18" height="18"/><rect x="1559.5" y="985.5" width="10" height="12"/><path d="M1562 988.5h5M1562 991.5h5M1562 994.5h5"/><rect x="1615.5" y="982.5" width="18" height="18"/><path d="M1621.5 982.5v10h6v-10"/></g><path d="M1662.5 991.8h11.5" stroke="#555" stroke-width="1.3"/><path d="M1682.5 991.8h148" stroke="#333" stroke-width="1.6"/><rect x="1741.6" y="983.3" width="8.5" height="17" fill="#3a3a3a"/><path d="M1756.5 986v11" stroke="#333" stroke-width="1.3"/><path d="M1839 991.8h11.5M1844.8 986v11.5" stroke="#555" stroke-width="1.3"/></svg>
<div style="position:absolute;top:985.10px;font-size:15px;line-height:15px;color:#333333;white-space:pre;letter-spacing:0.558px;left:1869.00px;">85%</div>
<div style="position:absolute;left:134.5px;top:123.5px;width:382.5px;height:79.5px;background:#ffffff;border:1px solid #c4c4c4;border-radius:6px;box-shadow:0 5px 9px -3px rgba(0,0,0,0.16);"></div>
<div style="position:absolute;left:138px;top:127px;width:91px;height:36px;background:#ffffff;border:1px solid #c6c6c6;"></div>
<div style="position:absolute;left:228px;top:127px;width:70px;height:36px;background:#ffffff;border:1px solid #c6c6c6;"></div>
<div style="position:absolute;top:135.76px;font-size:18px;line-height:18px;color:#444444;white-space:pre;letter-spacing:-0.402px;left:141.70px;">Calibri</div>
<div style="position:absolute;top:135.76px;font-size:18px;line-height:18px;color:#444444;white-space:pre;letter-spacing:-1.475px;left:232.50px;">11</div>
<svg style="left:0;top:0" width="600" height="220"><path d="M214.8 142.6h7.2l-3.6 4.7z" fill="#555"/><path d="M284 142.6h7.2l-3.6 4.7z" fill="#555"/><path d="M304.5 154.7l6.5-16.7h2l6.5 16.7" fill="none" stroke="#555" stroke-width="2.5"/><path d="M307.5 149h9" stroke="#555" stroke-width="2"/><path d="M317 139.5l3.5-4 3.5 4z" fill="#4a7bb7"/><path d="M337.5 154.7l5-13.2h1.5l5 13.2" fill="none" stroke="#555" stroke-width="2.2"/><path d="M340 150.5h6.5" stroke="#555" stroke-width="1.8"/><path d="M349.5 135h7l-3.5 4z" fill="#4a7bb7"/><path d="M378.5 146H367V135H387.8V141.5" fill="none" stroke="#3f72b0" stroke-width="2"/><rect x="368" y="136" width="2" height="2" fill="#3f72b0"/><rect x="368" y="143" width="2" height="2" fill="#3f72b0"/><rect x="385" y="136" width="2" height="2" fill="#3f72b0"/><circle cx="377.4" cy="140.4" r="3.3" fill="#4a7bc0"/><rect x="380.5" y="143.5" width="8.3" height="7.3" fill="#fdf5c8"/><path d="M380.5 146.3h8.3M380.5 148.3h8.3M380.5 150.3h8.3" stroke="#e3b66c" stroke-width="1.1"/><ellipse cx="384.6" cy="143.6" rx="4.2" ry="1.4" fill="#e6b86a"/><rect x="374" y="150.2" width="8.8" height="5.6" fill="#fdf5c8"/><path d="M374 152.7h8.8M374 155.2h8.8" stroke="#e3b66c" stroke-width="1.1"/><ellipse cx="378.4" cy="150.3" rx="4.4" ry="1.4" fill="#e6b86a"/><path d="M401.5 143.5l3.5 3.5 3.5-3.5" fill="none" stroke="#333" stroke-width="1.3"/><g fill="none" stroke="#b8b8b8" stroke-width="1.2"><rect x="484.5" y="133.5" width="22" height="22"/><path d="M484.5 139h22M484.5 150h22M495.5 133.5V139M495.5 150v5.5M487.5 144.5h16M490 142l-2.5 2.5 2.5 2.5M501 142l2.5 2.5-2.5 2.5"/></g><path d="M149 172h6.5c3.5 0 5 1.8 5 3.9 0 1.8-1.2 3-3 3.4 2.2.3 3.6 1.8 3.6 4 0 2.6-2 4.5-5.5 4.5H149z M152.5 174.8v3.9h2.6c1.5 0 2.4-.7 2.4-2 0-1.2-.9-1.9-2.4-1.9z M152.5 181.3v4.7h3c1.7 0 2.6-.8 2.6-2.4 0-1.5-1-2.3-2.6-2.3z" fill="#444" fill-rule="evenodd"/><path d="M184 172h7M180 188h7M188.5 172l-3.5 16" stroke="#555" stroke-width="2.2" fill="none"/><path d="M208 170h20M211 174h14M208 178h20M211 182h14M208 186h20M211 190h14" stroke="#555" stroke-width="1.2"/><path d="M246 173.5l-7.5 7.5 7.5 7 7.5-7.5z" fill="none" stroke="#555" stroke-width="1.2"/><path d="M245.5 178.5v-7a1.8 1.8 0 0 1 3.6 0v2" fill="none" stroke="#555" stroke-width="1.2"/><path d="M254 176c2 1 2.5 3.5 2 6l-1.5-.5" fill="#4a7bb7" stroke="#4a7bb7" stroke-width="1.5"/><rect x="238" y="187.3" width="24" height="5.2" fill="#9dc3e6"/><path d="M273.6 180l3.2 3.2 3.2-3.2" fill="none" stroke="#333" stroke-width="1.3"/><path d="M297 187l6-16h2.5l6 16" fill="none" stroke="#555" stroke-width="2.6"/><path d="M300 182h8.5" stroke="#555" stroke-width="2"/><rect x="292" y="186.8" width="24" height="6" fill="#ee0000"/><path d="M327.7 180l3.3 3.3 3.3-3.3" fill="none" stroke="#333" stroke-width="1.3"/><rect x="347" y="170" width="1" height="1" fill="#777"/><rect x="347" y="180" width="1" height="1" fill="#777"/><rect x="349" y="170" width="1" height="1" fill="#777"/><rect x="349" y="180" width="1" height="1" fill="#777"/><rect x="351" y="170" width="1" height="1" fill="#777"/><rect x="351" y="180" width="1" height="1" fill="#777"/><rect x="353" y="170" width="1" height="1" fill="#777"/><rect x="353" y="180" width="1" height="1" fill="#777"/><rect x="355" y="170" width="1" height="1" fill="#777"/><rect x="355" y="180" width="1" height="1" fill="#777"/><rect x="357" y="170" width="1" height="1" fill="#777"/><rect x="357" y="180" width="1" height="1" fill="#777"/><rect x="359" y="170" width="1" height="1" fill="#777"/><rect x="359" y="180" width="1" height="1" fill="#777"/><rect x="361" y="170" width="1" height="1" fill="#777"/><rect x="361" y="180" width="1" height="1" fill="#777"/><rect x="363" y="170" width="1" height="1" fill="#777"/><rect x="363" y="180" width="1" height="1" fill="#777"/><rect x="365" y="170" width="1" height="1" fill="#777"/><rect x="365" y="180" width="1" height="1" fill="#777"/><rect x="367" y="170" width="1" height="1" fill="#777"/><rect x="367" y="180" width="1" height="1" fill="#777"/><rect x="347" y="170" width="1" height="1" fill="#777"/><rect x="357" y="170" width="1" height="1" fill="#777"/><rect x="367" y="170" width="1" height="1" fill="#777"/><rect x="347" y="172" width="1" height="1" fill="#777"/><rect x="357" y="172" width="1" height="1" fill="#777"/><rect x="367" y="172" width="1" height="1" fill="#777"/><rect x="347" y="174" width="1" height="1" fill="#777"/><rect x="357" y="174" width="1" height="1" fill="#777"/><rect x="367" y="174" width="1" height="1" fill="#777"/><rect x="347" y="176" width="1" height="1" fill="#777"/><rect x="357" y="176" width="1" height="1" fill="#777"/><rect x="367" y="176" width="1" height="1" fill="#777"/><rect x="347" y="178" width="1" height="1" fill="#777"/><rect x="357" y="178" width="1" height="1" fill="#777"/><rect x="367" y="178" width="1" height="1" fill="#777"/><rect x="347" y="180" width="1" height="1" fill="#777"/><rect x="357" y="180" width="1" height="1" fill="#777"/><rect x="367" y="180" width="1" height="1" fill="#777"/><rect x="347" y="182" width="1" height="1" fill="#777"/><rect x="357" y="182" width="1" height="1" fill="#777"/><rect x="367" y="182" width="1" height="1" fill="#777"/><rect x="347" y="184" width="1" height="1" fill="#777"/><rect x="357" y="184" width="1" height="1" fill="#777"/><rect x="367" y="184" width="1" height="1" fill="#777"/><rect x="347" y="186" width="1" height="1" fill="#777"/><rect x="357" y="186" width="1" height="1" fill="#777"/><rect x="367" y="186" width="1" height="1" fill="#777"/><rect x="347" y="188" width="1" height="1" fill="#777"/><rect x="357" y="188" width="1" height="1" fill="#777"/><rect x="367" y="188" width="1" height="1" fill="#777"/><path d="M347 190.3h21" stroke="#555" stroke-width="1.2"/><path d="M381.5 180l3.3 3.3 3.3-3.3" fill="none" stroke="#333" stroke-width="1.3"/><path d="M410 175h-7.5M405.8 171.6l-3.4 3.4 3.4 3.4" fill="none" stroke="#3f72b0" stroke-width="2.2"/><path d="M433 187h7.5M437.2 183.6l3.4 3.4-3.4 3.4" fill="none" stroke="#3f72b0" stroke-width="2.2"/><path d="M464.2 180.3L471.6 177.9L479 185L473.4 190.7z" fill="#e8c07a"/><path d="M473.1 176.3L476 174.5L483 181.7L480.5 184.1z" fill="#666"/><path d="M479.9 175.5L484.7 171L487 173.4L482.6 178.2z" fill="#666"/></svg>
<div style="position:absolute;top:169.54px;font-size:12px;line-height:12px;color:#444;white-space:pre;letter-spacing:-0.334px;left:412.00px;">.0</div>
<div style="position:absolute;top:181.44px;font-size:12px;line-height:12px;color:#444;white-space:pre;letter-spacing:1.146px;left:403.00px;">.00</div>
<div style="position:absolute;top:169.54px;font-size:12px;line-height:12px;color:#444;white-space:pre;letter-spacing:1.496px;left:434.20px;">.00</div>
<div style="position:absolute;top:181.44px;font-size:12px;line-height:12px;color:#444;white-space:pre;letter-spacing:1.466px;left:442.60px;">.0</div>
<div style="position:absolute;top:133.68px;font-size:24px;line-height:24px;color:#555;white-space:pre;left:421.60px;">%</div>
<svg style="left:0;top:0" width="600" height="220"><path d="M464 138c2.6 0 4.2 1.8 4.2 4.3 0 3.4-2.6 6.2-6.6 7.7l-.9-1.5c2.2-1 3.4-2.3 3.6-3.6-2.3 0-3.9-1.4-3.9-3.4 0-2 1.5-3.5 3.6-3.5z" fill="#5a5a5a"/></svg>
<div style="position:absolute;left:134px;top:228px;width:332px;height:511px;background:#ffffff;border:1px solid #c2c2c2;border-radius:5px;box-shadow:0 10px 14px -8px rgba(0,0,0,0.16), 0 0 0 0.5px #d0d0d0;"></div>
<div style="position:absolute;left:141px;top:234.5px;width:318.5px;height:42.5px;background:#ffffff;border:1px solid #a8a8a8;"></div>
<div style="position:absolute;top:247.78px;font-size:17.5px;line-height:17.5px;color:#444444;white-space:pre;font-weight:bold;letter-spacing:-0.048px;left:160.70px;">Search the menus</div>
<div style="position:absolute;top:294.18px;font-size:17.5px;line-height:17.5px;color:#505050;white-space:pre;letter-spacing:-0.585px;left:182.80px;">Cu<span class="u">t</span></div>
<div style="position:absolute;top:331.18px;font-size:17.5px;line-height:17.5px;color:#505050;white-space:pre;letter-spacing:0.132px;left:182.50px;"><span class="u">C</span>opy</div>
<div style="position:absolute;left:171px;top:357px;width:294px;height:35px;background:#e6e6e6;"></div>
<div style="position:absolute;top:366.78px;font-size:17.5px;line-height:17.5px;color:#505050;white-space:pre;font-weight:bold;letter-spacing:0.057px;left:182.60px;">Paste Options:</div>
<div style="position:absolute;top:447.18px;font-size:17.5px;line-height:17.5px;color:#505050;white-space:pre;letter-spacing:-0.549px;left:182.50px;">Paste <span class="u">S</span>pecial...</div>
<div style="position:absolute;left:431.5px;top:444px;width:1.0px;height:20px;background:#d6d6d6;"></div>
<svg style="left:0;top:0" width="600" height="800"><path d="M444.5 449v11.7l7-5.85z" fill="#555"/></svg>
<div style="position:absolute;left:183px;top:473px;width:282px;height:1px;background:#e0e0e0;"></div>
<div style="position:absolute;top:487.18px;font-size:17.5px;line-height:17.5px;color:#505050;white-space:pre;letter-spacing:-0.133px;left:182.70px;">Insert Copied C<span class="u">e</span>lls</div>
<div style="position:absolute;top:523.78px;font-size:17.5px;line-height:17.5px;color:#505050;white-space:pre;letter-spacing:-0.171px;left:182.90px;"><span class="u">D</span>elete</div>
<div style="position:absolute;top:560.98px;font-size:17.5px;line-height:17.5px;color:#505050;white-space:pre;letter-spacing:-0.290px;left:183.10px;">Clear Co<span class="u">n</span>tents</div>
<div style="position:absolute;left:183px;top:587px;width:282px;height:1px;background:#e0e0e0;"></div>
<div style="position:absolute;top:600.98px;font-size:17.5px;line-height:17.5px;color:#505050;white-space:pre;letter-spacing:-0.293px;left:182.50px;"><span class="u">F</span>ormat Cells...</div>
<div style="position:absolute;top:637.88px;font-size:17.5px;line-height:17.5px;color:#505050;white-space:pre;letter-spacing:0.113px;left:182.80px;">Column <span class="u">W</span>idth...</div>
<div style="position:absolute;left:140px;top:664px;width:327px;height:37px;background:#c6c6c6;"></div>
<div style="position:absolute;left:135px;top:659px;width:337px;height:49px;background:transparent;border:5px solid #e81c24;"></div>
<div style="position:absolute;top:674.98px;font-size:17.5px;line-height:17.5px;color:#3c3c3c;white-space:pre;letter-spacing:0.347px;left:182.30px;"><span class="u">H</span>ide</div>
<div style="position:absolute;top:711.88px;font-size:17.5px;line-height:17.5px;color:#505050;white-space:pre;letter-spacing:0.055px;left:182.30px;"><span class="u">U</span>nhide</div>
<svg style="left:0;top:0" width="600" height="800"><path d="M145.5 290.5l12 14.5M158 290.5l-12 14.5" stroke="#555" stroke-width="1.8"/><circle cx="147" cy="307.8" r="3.3" fill="none" stroke="#4a7bb7" stroke-width="1.5"/><circle cx="157.2" cy="307.8" r="3.3" fill="none" stroke="#4a7bb7" stroke-width="1.5"/><path d="M143.5 327.5h7l3 3v11h-10z" fill="#fff" stroke="#666" stroke-width="1.1"/><path d="M145.5 332h5M145.5 334.5h6M145.5 337h6" stroke="#4a7bb7" stroke-width="1"/><path d="M152.5 333.5h7l3.5 3.5v11h-10.5z" fill="#fff" stroke="#666" stroke-width="1.1"/><path d="M154.5 339h6.5M154.5 341.5h6.5M154.5 344h6.5" stroke="#4a7bb7" stroke-width="1"/><rect x="144.2" y="364" width="13" height="18.7" rx="1.2" fill="#e8c37e"/><path d="M147 365.5h7.5v-2.5h-2.3v-1.5h-3v1.5H147z" fill="#6d6d6d"/><path d="M154.5 371.5h6l3.8 3.8v9.3h-9.8z" fill="#fff" stroke="#666" stroke-width="1.1"/><rect x="144" y="597.5" width="18.5" height="21.5" fill="#fff" stroke="#666" stroke-width="1.1"/><rect x="144" y="597.5" width="18.5" height="3" fill="#4a7bb7"/><path d="M147 604.5h2M151 604.5h8M147 609h2M151 609h8M147 613.5h2M151 613.5h8" stroke="#555" stroke-width="1.1"/></svg>
<svg style="left:0;top:0" width="600" height="800"><rect x="180.2" y="401" width="25.80000000000001" height="28.5" rx="1.5" fill="#e8c37e"/><path d="M186.6 404.5 h13 v-3 h-4 v-2.2 h-5 v2.2 h-4z" fill="#6d6d6d"/><path d="M195.5 411.5h10.5l4.5 4.5v15.5h-15z" fill="#fff" stroke="#666" stroke-width="1.1"/><path d="M206 411.5v4.5h4.5" fill="none" stroke="#666" stroke-width="1.1"/><path d="M229.5 403.6 h-3.2 v23.8 h20.49999999999999 v-23.8 h-3.2" fill="none" stroke="#e8c37e" stroke-width="3.3"/><path d="M230.35 405.5 h13 v-3 h-4 v-2.2 h-5 v2.2 h-4z" fill="#6d6d6d"/><path d="M273.5 403.6 h-3.2 v23.8 h20.400000000000023 v-23.8 h-3.2" fill="none" stroke="#e8c37e" stroke-width="3.3"/><path d="M274.3 405.5 h13 v-3 h-4 v-2.2 h-5 v2.2 h-4z" fill="#6d6d6d"/><path d="M317.5 403.6 h-3.2 v23.8 h20.3 v-23.8 h-3.2" fill="none" stroke="#e8c37e" stroke-width="3.3"/><path d="M318.25 405.5 h13 v-3 h-4 v-2.2 h-5 v2.2 h-4z" fill="#6d6d6d"/><g stroke="#777" stroke-width="1" fill="#cfe0f0"><rect x="323.5" y="425.5" width="6" height="5.5"/><rect x="329.5" y="425.5" width="6" height="5.5" fill="#fff"/><rect x="335.5" y="411.5" width="5.5" height="6"/><rect x="335.5" y="417.5" width="5.5" height="6" fill="#fff"/></g><path d="M325.5 423v-4a5 5 0 0 1 5-5h3.5" fill="none" stroke="#4a7bb7" stroke-width="1.4"/><path d="M332 412l2.5 2-2.5 2M323.5 421l2 2.2 2-2.2" fill="none" stroke="#4a7bb7" stroke-width="1.4"/><path d="M362.3 403.6 h-3.2 v23.8 h20.49999999999999 v-23.8 h-3.2" fill="none" stroke="#e8c37e" stroke-width="3.3"/><path d="M363.15 405.5 h13 v-3 h-4 v-2.2 h-5 v2.2 h-4z" fill="#6d6d6d"/><path d="M386.5 415.5l-9 9.5" stroke="#6d6d6d" stroke-width="2.8"/><path d="M377.5 425l-4 3-3.5 3.5c3 .5 6.5-1 8.5-3.5z" fill="#4a7bb7"/></svg>
<div style="position:absolute;top:419.69px;font-size:13px;line-height:13px;color:#222;white-space:pre;letter-spacing:-0.300px;left:233.00px;">123</div>
<div style="position:absolute;top:412.41px;font-size:19px;line-height:19px;color:#222;white-space:pre;left:280.00px;font-family:'Liberation Serif',serif;font-style:italic;">fx</div>
<div style="position:absolute;top:409.49px;font-size:13px;line-height:13px;color:#333;white-space:pre;font-weight:bold;left:364.00px;">%</div>
</body></html>
